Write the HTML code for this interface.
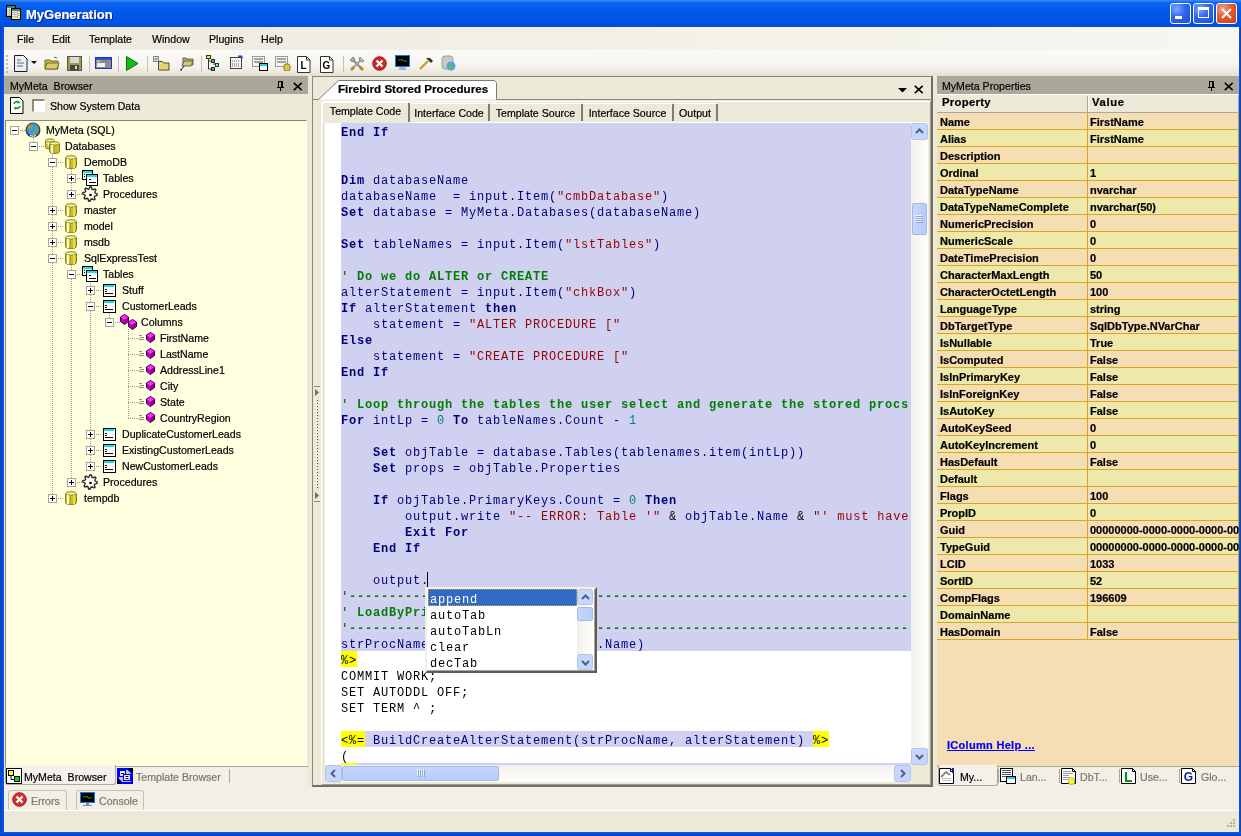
<!DOCTYPE html><html><head><meta charset="utf-8"><style>
*{box-sizing:border-box;margin:0;padding:0}
html,body{width:1241px;height:836px;overflow:hidden;background:#ECE9D8;will-change:transform;font-family:"Liberation Sans",sans-serif;font-size:11px;color:#000}
.a{position:absolute}
.t{position:absolute;white-space:pre;line-height:13px;font-size:10.6px;margin-top:1px;-webkit-text-stroke:0.2px currentColor}
.b{font-weight:bold;font-size:11px}
.mono{position:absolute;margin-top:2px;font-family:"Liberation Mono",monospace;font-size:12px;letter-spacing:0.8px;line-height:16px;white-space:pre;height:16px}
.k{color:#00007F;font-weight:bold}
.i{color:#00007F}
.s{color:#990000}
.c{color:#007F00;font-weight:bold}
.n{color:#007F7F}
.o{color:#000000}
.hl{background:#FFFF00}
</style></head><body>
<div class="a" style="left:0;top:0;width:1241px;height:27px;background:linear-gradient(#3A8CFA 0%,#0F64F0 10%,#0058EC 40%,#0054E6 80%,#004CDA 100%)"></div>
<div class="t" style="left:26px;top:6px;font-size:13px;line-height:16px;font-weight:bold;color:#fff;text-shadow:1px 1px 0 #0A1E7A">MyGeneration</div>
<svg class="a" style="left:0;top:0" width="26" height="24"><rect x="7" y="6" width="10" height="12" fill="#6A5030" opacity="0.7"/><rect x="6" y="5" width="10" height="12" fill="#000"/><rect x="7" y="6" width="8" height="10" fill="#B8B8B8"/><rect x="7" y="6" width="8" height="2" fill="#3A8A7A"/><rect x="7" y="8" width="2" height="1" fill="#fff"/><rect x="10" y="8" width="2" height="1" fill="#fff"/><rect x="13" y="8" width="2" height="1" fill="#fff"/><rect x="7" y="10" width="2" height="1" fill="#F4F0A0"/><rect x="10" y="10" width="2" height="1" fill="#F4F0A0"/><rect x="13" y="10" width="2" height="1" fill="#F4F0A0"/><rect x="7" y="12" width="2" height="1" fill="#fff"/><rect x="10" y="12" width="2" height="1" fill="#fff"/><rect x="13" y="12" width="2" height="1" fill="#fff"/><rect x="7" y="14" width="2" height="1" fill="#F4F0A0"/><rect x="10" y="14" width="2" height="1" fill="#F4F0A0"/><rect x="13" y="14" width="2" height="1" fill="#F4F0A0"/><rect x="12" y="9" width="10" height="12" fill="#6A5030" opacity="0.7"/><rect x="11" y="8" width="10" height="12" fill="#000"/><rect x="12" y="9" width="8" height="10" fill="#B8B8B8"/><rect x="12" y="9" width="8" height="2" fill="#3A8A7A"/><rect x="12" y="11" width="2" height="1" fill="#fff"/><rect x="15" y="11" width="2" height="1" fill="#fff"/><rect x="12" y="13" width="2" height="1" fill="#F4F0A0"/><rect x="15" y="13" width="2" height="1" fill="#F4F0A0"/><rect x="12" y="15" width="2" height="1" fill="#fff"/><rect x="15" y="15" width="2" height="1" fill="#fff"/><rect x="12" y="17" width="2" height="1" fill="#F4F0A0"/><rect x="15" y="17" width="2" height="1" fill="#F4F0A0"/><rect x="18" y="12" width="2" height="1" fill="#fff"/><rect x="18" y="14" width="2" height="1" fill="#F4F0A0"/><rect x="18" y="16" width="2" height="1" fill="#fff"/><rect x="12" y="18" width="8" height="1" fill="#F4F0A0"/></svg>
<div class="a" style="left:1170px;top:3px;width:21px;height:21px;border:1px solid #fff;border-radius:3px;background:radial-gradient(circle at 30% 25%,#7FA7FF 0%,#2E66F0 45%,#1E4FD8 100%)"></div>
<div class="a" style="left:1175px;top:16px;width:7px;height:3px;background:#fff"></div>
<div class="a" style="left:1193px;top:3px;width:21px;height:21px;border:1px solid #fff;border-radius:3px;background:radial-gradient(circle at 30% 25%,#7FA7FF 0%,#2E66F0 45%,#1E4FD8 100%)"></div>
<div class="a" style="left:1198px;top:7px;width:11px;height:11px;border:1px solid #fff;border-top-width:3px"></div>
<div class="a" style="left:1216px;top:3px;width:21px;height:21px;border:1px solid #fff;border-radius:3px;background:radial-gradient(circle at 30% 25%,#F2A089 0%,#E35B2D 45%,#C8401A 100%)"></div>
<svg class="a" style="left:1216px;top:3px" width="21" height="21"><path d="M6 6L15 15M15 6L6 15" stroke="#fff" stroke-width="2"/></svg>
<div class="a" style="left:0;top:26px;width:4px;height:810px;background:linear-gradient(90deg,#0040C8,#0A58E8)"></div>
<div class="a" style="left:1239px;top:26px;width:2px;height:810px;background:linear-gradient(90deg,#0A58E8,#0040C8)"></div>
<div class="a" style="left:0;top:832px;width:1241px;height:4px;background:linear-gradient(#0A58E8,#0040C8)"></div>
<div class="a" style="left:4px;top:27px;width:1235px;height:23px;background:linear-gradient(90deg,#EDEADF,#F1EFE6 40%,#F7F6F1)"></div>
<div class="t" style="left:17px;top:32px">File</div>
<div class="t" style="left:52px;top:32px">Edit</div>
<div class="t" style="left:89px;top:32px">Template</div>
<div class="t" style="left:152px;top:32px">Window</div>
<div class="t" style="left:209px;top:32px">Plugins</div>
<div class="t" style="left:261px;top:32px">Help</div>
<div class="a" style="left:4px;top:50px;width:1235px;height:26px;border-radius:0 3px 3px 0;background:linear-gradient(#FBFAF7,#F6F4EE 60%,#E4E1D3)"></div>
<svg class="a" style="left:6px;top:55px" width="3" height="18" viewBox="0 0 3 18"><rect x="0" y="0" width="2" height="2" fill="#C1BDAE"/><rect x="0" y="4" width="2" height="2" fill="#C1BDAE"/><rect x="0" y="8" width="2" height="2" fill="#C1BDAE"/><rect x="0" y="12" width="2" height="2" fill="#C1BDAE"/><rect x="0" y="16" width="2" height="2" fill="#C1BDAE"/></svg>
<svg class="a" style="left:14px;top:55px" width="14" height="17" viewBox="0 0 14 17"><path d="M0.5 0.5h9l3.5 3.5v12.5h-12.5z" fill="#E6F2F2" stroke="#301030"/><path d="M3 5h4M3 8h7M3 11h6" stroke="#667" stroke-width="1"/></svg>
<svg class="a" style="left:31px;top:61px" width="6" height="4" viewBox="0 0 6 4"><path d="M0 0h6l-3 3z" fill="#000"/></svg>
<svg class="a" style="left:44px;top:56px" width="16" height="14" viewBox="0 0 16 14"><path d="M1 4h5l1 1h7v8H1z" fill="#C6B75A" stroke="#7A6A20"/><path d="M3 7h12l-2 6H1z" fill="#D9CC6E" stroke="#7A6A20"/><path d="M10 1l3 1" stroke="#555"/></svg>
<svg class="a" style="left:67px;top:56px" width="15" height="15" viewBox="0 0 15 15"><rect x="0.5" y="0.5" width="14" height="14" fill="#A39B4A" stroke="#555"/><rect x="3" y="1" width="9" height="6" fill="#D8D8D8"/><rect x="3" y="9" width="9" height="5" fill="#444"/><rect x="8" y="10" width="2" height="3" fill="#ddd"/></svg>
<div class="a" style="left:89px;top:56px;width:1px;height:16px;background:#C5C2B2"></div>
<svg class="a" style="left:95px;top:57px" width="17" height="12" viewBox="0 0 17 12"><rect x="0.5" y="0.5" width="16" height="11" fill="#8C8C8C" stroke="#2030C0"/><rect x="1" y="1" width="15" height="2" fill="#3050D0"/><rect x="2" y="6" width="8" height="4" fill="#F0F0F0"/><path d="M2 4h3" stroke="#eee"/></svg>
<div class="a" style="left:118px;top:56px;width:1px;height:16px;background:#C5C2B2"></div>
<svg class="a" style="left:126px;top:56px" width="13" height="15" viewBox="0 0 13 15"><path d="M0.5 0.5L12 7.5 0.5 14.5z" fill="#10C010" stroke="#0A6A0A"/></svg>
<div class="a" style="left:147px;top:56px;width:1px;height:16px;background:#C5C2B2"></div>
<svg class="a" style="left:153px;top:56px" width="17" height="15" viewBox="0 0 17 15"><rect x="0.5" y="0.5" width="5" height="5" fill="#fff" stroke="#888"/><path d="M3 0.5v5M0.5 3h5" stroke="#888"/><path d="M5.5 5.5h4l1 1.5h5.5v7h-10.5z" fill="#E8E070" stroke="#444"/><path d="M8 9h7M8 11h7" stroke="#C8C050" stroke-dasharray="1 1"/></svg>
<svg class="a" style="left:178px;top:56px" width="16" height="16" viewBox="0 0 16 16"><path d="M5 2h3l1 1h6v6H5z" fill="#B8AE5A" stroke="#665"/><path d="M6 5h9l-2 5H4z" fill="#D0C870" stroke="#665"/><path d="M6 10L3 14M2 14h2" stroke="#222"/></svg>
<div class="a" style="left:201px;top:56px;width:1px;height:16px;background:#C5C2B2"></div>
<svg class="a" style="left:206px;top:55px" width="13" height="16" viewBox="0 0 13 16"><rect x="0.5" y="0.5" width="4" height="3" fill="#FFF000" stroke="#333"/><path d="M2.5 4v10h3M2.5 6h3M7 9h3" stroke="#333" fill="none"/><rect x="5.5" y="4.5" width="3" height="3" fill="#10D010" stroke="#333"/><rect x="5.5" y="12.5" width="3" height="3" fill="#10D010" stroke="#333"/><rect x="9.5" y="8.5" width="3" height="3" fill="#80E0F0" stroke="#333"/></svg>
<svg class="a" style="left:230px;top:55px" width="14" height="15" viewBox="0 0 14 15"><rect x="0.5" y="2.5" width="11" height="11" fill="#F4F4F4" stroke="#444"/><path d="M2 6h8M2 9h8M2 11h8" stroke="#666" stroke-dasharray="1 1"/><path d="M8 1l4 0 0 3" stroke="#3040A0" fill="#3040A0"/></svg>
<svg class="a" style="left:252px;top:56px" width="16" height="15" viewBox="0 0 16 15"><rect x="0.5" y="0.5" width="12" height="10" fill="#F4F4F4" stroke="#999"/><path d="M2 3h9M2 6h9" stroke="#888" stroke-width="1.3"/><rect x="7.5" y="7.5" width="8" height="7" fill="#fff" stroke="#000"/><rect x="8" y="8" width="7" height="2" fill="#2BC8E8"/></svg>
<svg class="a" style="left:275px;top:56px" width="16" height="15" viewBox="0 0 16 15"><rect x="0.5" y="0.5" width="12" height="10" fill="#F4F4F4" stroke="#999"/><path d="M2 3h9M2 6h9" stroke="#888" stroke-width="1.3"/><rect x="9" y="8" width="6" height="7" rx="2" fill="#D8CC40" stroke="#8A7A10"/></svg>
<svg class="a" style="left:297px;top:56px" width="14" height="17" viewBox="0 0 14 17"><path d="M0.5 0.5h9l3.5 3.5v12.5h-12.5z" fill="#fff" stroke="#333"/><path d="M9.5 0.5v3.5h3.5" fill="none" stroke="#333"/><text x="6.5" y="13" font-family="Liberation Sans" font-weight="bold" font-size="10" text-anchor="middle" fill="#000">L</text></svg>
<svg class="a" style="left:320px;top:56px" width="14" height="17" viewBox="0 0 14 17"><path d="M0.5 0.5h9l3.5 3.5v12.5h-12.5z" fill="#fff" stroke="#333"/><path d="M9.5 0.5v3.5h3.5" fill="none" stroke="#333"/><text x="6.5" y="13" font-family="Liberation Sans" font-weight="bold" font-size="10" text-anchor="middle" fill="#000">G</text></svg>
<div class="a" style="left:343px;top:56px;width:1px;height:16px;background:#C5C2B2"></div>
<svg class="a" style="left:349px;top:56px" width="16" height="16" viewBox="0 0 16 16"><path d="M3 3L13 13" stroke="#909090" stroke-width="2.4"/><path d="M1 4l3-3 2 2-3 3z" fill="#B0B0B0" stroke="#707070" stroke-width="0.8"/><path d="M13 3L3 13" stroke="#A0A0A0" stroke-width="2.2"/><path d="M11 1l4 4-2 1-3-3z" fill="#C0C0C0" stroke="#707070" stroke-width="0.8"/><path d="M5 11L2 14" stroke="#D07A20" stroke-width="2.6"/><path d="M11 11l3 3" stroke="#D07A20" stroke-width="2.6"/></svg>
<svg class="a" style="left:372px;top:56px" width="15" height="15" viewBox="0 0 15 15"><circle cx="7.5" cy="7.5" r="6.8" fill="#D02828" stroke="#A01818"/><path d="M4.5 4.5l6 6M10.5 4.5l-6 6" stroke="#fff" stroke-width="2.2"/></svg>
<svg class="a" style="left:395px;top:55px" width="15" height="16" viewBox="0 0 15 16"><rect x="0.5" y="0.5" width="14" height="11" fill="#000" stroke="#1080E0"/><path d="M3 5h3l1-1 1 2h4" stroke="#30C030" stroke-width="0.8" fill="none"/><path d="M5 12h5l2 3H3z" fill="#B0B0E0"/></svg>
<svg class="a" style="left:418px;top:56px" width="16" height="15" viewBox="0 0 16 15"><path d="M2 13L10 5" stroke="#C8A020" stroke-width="2.4"/><path d="M8 2l5 5 2-2-3-3z" fill="#333"/></svg>
<svg class="a" style="left:441px;top:55px" width="15" height="16" viewBox="0 0 15 16"><rect x="1" y="1" width="11" height="13" rx="3" fill="#C8C8C8" stroke="#A0A0A0"/><circle cx="10" cy="11" r="4.5" fill="#58A0E8"/><path d="M7 9l3 1 2 3-3 1z" fill="#50C830"/></svg>
<div class="a" style="left:4px;top:786px;width:1235px;height:24px;background:#F1EFE6"></div>
<div class="a" style="left:4px;top:76px;width:304px;height:18px;background:#ACA899"></div>
<div class="t" style="left:10px;top:79px">MyMeta  Browser</div>
<svg class="a" style="left:277px;top:81px" width="8" height="11" viewBox="0 0 8 11"><rect x="1" y="0" width="5" height="1" fill="#000"/><rect x="1" y="0" width="1" height="6" fill="#000"/><rect x="4" y="0" width="2" height="6" fill="#000"/><rect x="0" y="6" width="7" height="1" fill="#000"/><rect x="3" y="7" width="1" height="3" fill="#000"/></svg>
<svg class="a" style="left:293px;top:82px" width="10" height="9" viewBox="0 0 10 9"><path d="M0.8 0.8L8.7 8.2M8.7 0.8L0.8 8.2" stroke="#000" stroke-width="1.6"/></svg>
<svg class="a" style="left:10px;top:97px" width="14" height="17" viewBox="0 0 14 17"><path d="M0.5 0.5h9l3.5 3.5v12.5h-12.5z" fill="#fff" stroke="#000"/><path d="M4 7a3 3 0 0 1 5-1.5M10 9a3 3 0 0 1-5 1.5" stroke="#1A9A1A" stroke-width="1.6" fill="none"/><path d="M8 3.5l2.5 2.5-3 0.5zM6 13l-2.5-2.5 3-0.5z" fill="#1A9A1A"/></svg>
<div class="a" style="left:32px;top:99px;width:13px;height:13px;border-style:solid;border-width:2px 1px 1px 2px;border-color:#8F8C7F #FFFFFF #FFFFFF #8F8C7F;background:#fff"></div>
<div class="t" style="left:50px;top:99px">Show System Data</div>
<div class="a" style="left:5px;top:120px;width:302px;height:646px;background:#FFFFE0;border:1px solid #7F9DB9;border-color:#8A877A #fff #fff #8A877A"></div>
<svg class="a" style="left:0;top:0" width="310" height="836"><rect x="20" y="130" width="1" height="1" fill="#9A9A9A"/><rect x="22" y="130" width="1" height="1" fill="#9A9A9A"/><rect x="24" y="130" width="1" height="1" fill="#9A9A9A"/><rect x="33" y="137" width="1" height="1" fill="#9A9A9A"/><rect x="33" y="139" width="1" height="1" fill="#9A9A9A"/><rect x="33" y="141" width="1" height="1" fill="#9A9A9A"/><rect x="33" y="143" width="1" height="1" fill="#9A9A9A"/><rect x="33" y="145" width="1" height="1" fill="#9A9A9A"/><rect x="39" y="146" width="1" height="1" fill="#9A9A9A"/><rect x="41" y="146" width="1" height="1" fill="#9A9A9A"/><rect x="43" y="146" width="1" height="1" fill="#9A9A9A"/><rect x="52" y="153" width="1" height="1" fill="#9A9A9A"/><rect x="52" y="155" width="1" height="1" fill="#9A9A9A"/><rect x="52" y="157" width="1" height="1" fill="#9A9A9A"/><rect x="52" y="159" width="1" height="1" fill="#9A9A9A"/><rect x="52" y="161" width="1" height="1" fill="#9A9A9A"/><rect x="52" y="163" width="1" height="1" fill="#9A9A9A"/><rect x="52" y="165" width="1" height="1" fill="#9A9A9A"/><rect x="52" y="167" width="1" height="1" fill="#9A9A9A"/><rect x="52" y="169" width="1" height="1" fill="#9A9A9A"/><rect x="52" y="171" width="1" height="1" fill="#9A9A9A"/><rect x="52" y="173" width="1" height="1" fill="#9A9A9A"/><rect x="52" y="175" width="1" height="1" fill="#9A9A9A"/><rect x="52" y="177" width="1" height="1" fill="#9A9A9A"/><rect x="52" y="179" width="1" height="1" fill="#9A9A9A"/><rect x="52" y="181" width="1" height="1" fill="#9A9A9A"/><rect x="52" y="183" width="1" height="1" fill="#9A9A9A"/><rect x="52" y="185" width="1" height="1" fill="#9A9A9A"/><rect x="52" y="187" width="1" height="1" fill="#9A9A9A"/><rect x="52" y="189" width="1" height="1" fill="#9A9A9A"/><rect x="52" y="191" width="1" height="1" fill="#9A9A9A"/><rect x="52" y="193" width="1" height="1" fill="#9A9A9A"/><rect x="52" y="195" width="1" height="1" fill="#9A9A9A"/><rect x="52" y="197" width="1" height="1" fill="#9A9A9A"/><rect x="52" y="199" width="1" height="1" fill="#9A9A9A"/><rect x="52" y="201" width="1" height="1" fill="#9A9A9A"/><rect x="52" y="203" width="1" height="1" fill="#9A9A9A"/><rect x="52" y="205" width="1" height="1" fill="#9A9A9A"/><rect x="52" y="207" width="1" height="1" fill="#9A9A9A"/><rect x="52" y="209" width="1" height="1" fill="#9A9A9A"/><rect x="52" y="211" width="1" height="1" fill="#9A9A9A"/><rect x="52" y="213" width="1" height="1" fill="#9A9A9A"/><rect x="52" y="215" width="1" height="1" fill="#9A9A9A"/><rect x="52" y="217" width="1" height="1" fill="#9A9A9A"/><rect x="52" y="219" width="1" height="1" fill="#9A9A9A"/><rect x="52" y="221" width="1" height="1" fill="#9A9A9A"/><rect x="52" y="223" width="1" height="1" fill="#9A9A9A"/><rect x="52" y="225" width="1" height="1" fill="#9A9A9A"/><rect x="52" y="227" width="1" height="1" fill="#9A9A9A"/><rect x="52" y="229" width="1" height="1" fill="#9A9A9A"/><rect x="52" y="231" width="1" height="1" fill="#9A9A9A"/><rect x="52" y="233" width="1" height="1" fill="#9A9A9A"/><rect x="52" y="235" width="1" height="1" fill="#9A9A9A"/><rect x="52" y="237" width="1" height="1" fill="#9A9A9A"/><rect x="52" y="239" width="1" height="1" fill="#9A9A9A"/><rect x="52" y="241" width="1" height="1" fill="#9A9A9A"/><rect x="52" y="243" width="1" height="1" fill="#9A9A9A"/><rect x="52" y="245" width="1" height="1" fill="#9A9A9A"/><rect x="52" y="247" width="1" height="1" fill="#9A9A9A"/><rect x="52" y="249" width="1" height="1" fill="#9A9A9A"/><rect x="52" y="251" width="1" height="1" fill="#9A9A9A"/><rect x="52" y="253" width="1" height="1" fill="#9A9A9A"/><rect x="52" y="255" width="1" height="1" fill="#9A9A9A"/><rect x="52" y="257" width="1" height="1" fill="#9A9A9A"/><rect x="52" y="259" width="1" height="1" fill="#9A9A9A"/><rect x="52" y="261" width="1" height="1" fill="#9A9A9A"/><rect x="52" y="263" width="1" height="1" fill="#9A9A9A"/><rect x="52" y="265" width="1" height="1" fill="#9A9A9A"/><rect x="52" y="267" width="1" height="1" fill="#9A9A9A"/><rect x="52" y="269" width="1" height="1" fill="#9A9A9A"/><rect x="52" y="271" width="1" height="1" fill="#9A9A9A"/><rect x="52" y="273" width="1" height="1" fill="#9A9A9A"/><rect x="52" y="275" width="1" height="1" fill="#9A9A9A"/><rect x="52" y="277" width="1" height="1" fill="#9A9A9A"/><rect x="52" y="279" width="1" height="1" fill="#9A9A9A"/><rect x="52" y="281" width="1" height="1" fill="#9A9A9A"/><rect x="52" y="283" width="1" height="1" fill="#9A9A9A"/><rect x="52" y="285" width="1" height="1" fill="#9A9A9A"/><rect x="52" y="287" width="1" height="1" fill="#9A9A9A"/><rect x="52" y="289" width="1" height="1" fill="#9A9A9A"/><rect x="52" y="291" width="1" height="1" fill="#9A9A9A"/><rect x="52" y="293" width="1" height="1" fill="#9A9A9A"/><rect x="52" y="295" width="1" height="1" fill="#9A9A9A"/><rect x="52" y="297" width="1" height="1" fill="#9A9A9A"/><rect x="52" y="299" width="1" height="1" fill="#9A9A9A"/><rect x="52" y="301" width="1" height="1" fill="#9A9A9A"/><rect x="52" y="303" width="1" height="1" fill="#9A9A9A"/><rect x="52" y="305" width="1" height="1" fill="#9A9A9A"/><rect x="52" y="307" width="1" height="1" fill="#9A9A9A"/><rect x="52" y="309" width="1" height="1" fill="#9A9A9A"/><rect x="52" y="311" width="1" height="1" fill="#9A9A9A"/><rect x="52" y="313" width="1" height="1" fill="#9A9A9A"/><rect x="52" y="315" width="1" height="1" fill="#9A9A9A"/><rect x="52" y="317" width="1" height="1" fill="#9A9A9A"/><rect x="52" y="319" width="1" height="1" fill="#9A9A9A"/><rect x="52" y="321" width="1" height="1" fill="#9A9A9A"/><rect x="52" y="323" width="1" height="1" fill="#9A9A9A"/><rect x="52" y="325" width="1" height="1" fill="#9A9A9A"/><rect x="52" y="327" width="1" height="1" fill="#9A9A9A"/><rect x="52" y="329" width="1" height="1" fill="#9A9A9A"/><rect x="52" y="331" width="1" height="1" fill="#9A9A9A"/><rect x="52" y="333" width="1" height="1" fill="#9A9A9A"/><rect x="52" y="335" width="1" height="1" fill="#9A9A9A"/><rect x="52" y="337" width="1" height="1" fill="#9A9A9A"/><rect x="52" y="339" width="1" height="1" fill="#9A9A9A"/><rect x="52" y="341" width="1" height="1" fill="#9A9A9A"/><rect x="52" y="343" width="1" height="1" fill="#9A9A9A"/><rect x="52" y="345" width="1" height="1" fill="#9A9A9A"/><rect x="52" y="347" width="1" height="1" fill="#9A9A9A"/><rect x="52" y="349" width="1" height="1" fill="#9A9A9A"/><rect x="52" y="351" width="1" height="1" fill="#9A9A9A"/><rect x="52" y="353" width="1" height="1" fill="#9A9A9A"/><rect x="52" y="355" width="1" height="1" fill="#9A9A9A"/><rect x="52" y="357" width="1" height="1" fill="#9A9A9A"/><rect x="52" y="359" width="1" height="1" fill="#9A9A9A"/><rect x="52" y="361" width="1" height="1" fill="#9A9A9A"/><rect x="52" y="363" width="1" height="1" fill="#9A9A9A"/><rect x="52" y="365" width="1" height="1" fill="#9A9A9A"/><rect x="52" y="367" width="1" height="1" fill="#9A9A9A"/><rect x="52" y="369" width="1" height="1" fill="#9A9A9A"/><rect x="52" y="371" width="1" height="1" fill="#9A9A9A"/><rect x="52" y="373" width="1" height="1" fill="#9A9A9A"/><rect x="52" y="375" width="1" height="1" fill="#9A9A9A"/><rect x="52" y="377" width="1" height="1" fill="#9A9A9A"/><rect x="52" y="379" width="1" height="1" fill="#9A9A9A"/><rect x="52" y="381" width="1" height="1" fill="#9A9A9A"/><rect x="52" y="383" width="1" height="1" fill="#9A9A9A"/><rect x="52" y="385" width="1" height="1" fill="#9A9A9A"/><rect x="52" y="387" width="1" height="1" fill="#9A9A9A"/><rect x="52" y="389" width="1" height="1" fill="#9A9A9A"/><rect x="52" y="391" width="1" height="1" fill="#9A9A9A"/><rect x="52" y="393" width="1" height="1" fill="#9A9A9A"/><rect x="52" y="395" width="1" height="1" fill="#9A9A9A"/><rect x="52" y="397" width="1" height="1" fill="#9A9A9A"/><rect x="52" y="399" width="1" height="1" fill="#9A9A9A"/><rect x="52" y="401" width="1" height="1" fill="#9A9A9A"/><rect x="52" y="403" width="1" height="1" fill="#9A9A9A"/><rect x="52" y="405" width="1" height="1" fill="#9A9A9A"/><rect x="52" y="407" width="1" height="1" fill="#9A9A9A"/><rect x="52" y="409" width="1" height="1" fill="#9A9A9A"/><rect x="52" y="411" width="1" height="1" fill="#9A9A9A"/><rect x="52" y="413" width="1" height="1" fill="#9A9A9A"/><rect x="52" y="415" width="1" height="1" fill="#9A9A9A"/><rect x="52" y="417" width="1" height="1" fill="#9A9A9A"/><rect x="52" y="419" width="1" height="1" fill="#9A9A9A"/><rect x="52" y="421" width="1" height="1" fill="#9A9A9A"/><rect x="52" y="423" width="1" height="1" fill="#9A9A9A"/><rect x="52" y="425" width="1" height="1" fill="#9A9A9A"/><rect x="52" y="427" width="1" height="1" fill="#9A9A9A"/><rect x="52" y="429" width="1" height="1" fill="#9A9A9A"/><rect x="52" y="431" width="1" height="1" fill="#9A9A9A"/><rect x="52" y="433" width="1" height="1" fill="#9A9A9A"/><rect x="52" y="435" width="1" height="1" fill="#9A9A9A"/><rect x="52" y="437" width="1" height="1" fill="#9A9A9A"/><rect x="52" y="439" width="1" height="1" fill="#9A9A9A"/><rect x="52" y="441" width="1" height="1" fill="#9A9A9A"/><rect x="52" y="443" width="1" height="1" fill="#9A9A9A"/><rect x="52" y="445" width="1" height="1" fill="#9A9A9A"/><rect x="52" y="447" width="1" height="1" fill="#9A9A9A"/><rect x="52" y="449" width="1" height="1" fill="#9A9A9A"/><rect x="52" y="451" width="1" height="1" fill="#9A9A9A"/><rect x="52" y="453" width="1" height="1" fill="#9A9A9A"/><rect x="52" y="455" width="1" height="1" fill="#9A9A9A"/><rect x="52" y="457" width="1" height="1" fill="#9A9A9A"/><rect x="52" y="459" width="1" height="1" fill="#9A9A9A"/><rect x="52" y="461" width="1" height="1" fill="#9A9A9A"/><rect x="52" y="463" width="1" height="1" fill="#9A9A9A"/><rect x="52" y="465" width="1" height="1" fill="#9A9A9A"/><rect x="52" y="467" width="1" height="1" fill="#9A9A9A"/><rect x="52" y="469" width="1" height="1" fill="#9A9A9A"/><rect x="52" y="471" width="1" height="1" fill="#9A9A9A"/><rect x="52" y="473" width="1" height="1" fill="#9A9A9A"/><rect x="52" y="475" width="1" height="1" fill="#9A9A9A"/><rect x="52" y="477" width="1" height="1" fill="#9A9A9A"/><rect x="52" y="479" width="1" height="1" fill="#9A9A9A"/><rect x="52" y="481" width="1" height="1" fill="#9A9A9A"/><rect x="52" y="483" width="1" height="1" fill="#9A9A9A"/><rect x="52" y="485" width="1" height="1" fill="#9A9A9A"/><rect x="52" y="487" width="1" height="1" fill="#9A9A9A"/><rect x="52" y="489" width="1" height="1" fill="#9A9A9A"/><rect x="52" y="491" width="1" height="1" fill="#9A9A9A"/><rect x="52" y="493" width="1" height="1" fill="#9A9A9A"/><rect x="52" y="495" width="1" height="1" fill="#9A9A9A"/><rect x="52" y="497" width="1" height="1" fill="#9A9A9A"/><rect x="58" y="162" width="1" height="1" fill="#9A9A9A"/><rect x="60" y="162" width="1" height="1" fill="#9A9A9A"/><rect x="62" y="162" width="1" height="1" fill="#9A9A9A"/><rect x="71" y="169" width="1" height="1" fill="#9A9A9A"/><rect x="71" y="171" width="1" height="1" fill="#9A9A9A"/><rect x="71" y="173" width="1" height="1" fill="#9A9A9A"/><rect x="71" y="175" width="1" height="1" fill="#9A9A9A"/><rect x="71" y="177" width="1" height="1" fill="#9A9A9A"/><rect x="71" y="179" width="1" height="1" fill="#9A9A9A"/><rect x="71" y="181" width="1" height="1" fill="#9A9A9A"/><rect x="71" y="183" width="1" height="1" fill="#9A9A9A"/><rect x="71" y="185" width="1" height="1" fill="#9A9A9A"/><rect x="71" y="187" width="1" height="1" fill="#9A9A9A"/><rect x="71" y="189" width="1" height="1" fill="#9A9A9A"/><rect x="71" y="191" width="1" height="1" fill="#9A9A9A"/><rect x="71" y="193" width="1" height="1" fill="#9A9A9A"/><rect x="77" y="178" width="1" height="1" fill="#9A9A9A"/><rect x="79" y="178" width="1" height="1" fill="#9A9A9A"/><rect x="81" y="178" width="1" height="1" fill="#9A9A9A"/><rect x="77" y="194" width="1" height="1" fill="#9A9A9A"/><rect x="79" y="194" width="1" height="1" fill="#9A9A9A"/><rect x="81" y="194" width="1" height="1" fill="#9A9A9A"/><rect x="58" y="210" width="1" height="1" fill="#9A9A9A"/><rect x="60" y="210" width="1" height="1" fill="#9A9A9A"/><rect x="62" y="210" width="1" height="1" fill="#9A9A9A"/><rect x="58" y="226" width="1" height="1" fill="#9A9A9A"/><rect x="60" y="226" width="1" height="1" fill="#9A9A9A"/><rect x="62" y="226" width="1" height="1" fill="#9A9A9A"/><rect x="58" y="242" width="1" height="1" fill="#9A9A9A"/><rect x="60" y="242" width="1" height="1" fill="#9A9A9A"/><rect x="62" y="242" width="1" height="1" fill="#9A9A9A"/><rect x="58" y="258" width="1" height="1" fill="#9A9A9A"/><rect x="60" y="258" width="1" height="1" fill="#9A9A9A"/><rect x="62" y="258" width="1" height="1" fill="#9A9A9A"/><rect x="71" y="265" width="1" height="1" fill="#9A9A9A"/><rect x="71" y="267" width="1" height="1" fill="#9A9A9A"/><rect x="71" y="269" width="1" height="1" fill="#9A9A9A"/><rect x="71" y="271" width="1" height="1" fill="#9A9A9A"/><rect x="71" y="273" width="1" height="1" fill="#9A9A9A"/><rect x="71" y="275" width="1" height="1" fill="#9A9A9A"/><rect x="71" y="277" width="1" height="1" fill="#9A9A9A"/><rect x="71" y="279" width="1" height="1" fill="#9A9A9A"/><rect x="71" y="281" width="1" height="1" fill="#9A9A9A"/><rect x="71" y="283" width="1" height="1" fill="#9A9A9A"/><rect x="71" y="285" width="1" height="1" fill="#9A9A9A"/><rect x="71" y="287" width="1" height="1" fill="#9A9A9A"/><rect x="71" y="289" width="1" height="1" fill="#9A9A9A"/><rect x="71" y="291" width="1" height="1" fill="#9A9A9A"/><rect x="71" y="293" width="1" height="1" fill="#9A9A9A"/><rect x="71" y="295" width="1" height="1" fill="#9A9A9A"/><rect x="71" y="297" width="1" height="1" fill="#9A9A9A"/><rect x="71" y="299" width="1" height="1" fill="#9A9A9A"/><rect x="71" y="301" width="1" height="1" fill="#9A9A9A"/><rect x="71" y="303" width="1" height="1" fill="#9A9A9A"/><rect x="71" y="305" width="1" height="1" fill="#9A9A9A"/><rect x="71" y="307" width="1" height="1" fill="#9A9A9A"/><rect x="71" y="309" width="1" height="1" fill="#9A9A9A"/><rect x="71" y="311" width="1" height="1" fill="#9A9A9A"/><rect x="71" y="313" width="1" height="1" fill="#9A9A9A"/><rect x="71" y="315" width="1" height="1" fill="#9A9A9A"/><rect x="71" y="317" width="1" height="1" fill="#9A9A9A"/><rect x="71" y="319" width="1" height="1" fill="#9A9A9A"/><rect x="71" y="321" width="1" height="1" fill="#9A9A9A"/><rect x="71" y="323" width="1" height="1" fill="#9A9A9A"/><rect x="71" y="325" width="1" height="1" fill="#9A9A9A"/><rect x="71" y="327" width="1" height="1" fill="#9A9A9A"/><rect x="71" y="329" width="1" height="1" fill="#9A9A9A"/><rect x="71" y="331" width="1" height="1" fill="#9A9A9A"/><rect x="71" y="333" width="1" height="1" fill="#9A9A9A"/><rect x="71" y="335" width="1" height="1" fill="#9A9A9A"/><rect x="71" y="337" width="1" height="1" fill="#9A9A9A"/><rect x="71" y="339" width="1" height="1" fill="#9A9A9A"/><rect x="71" y="341" width="1" height="1" fill="#9A9A9A"/><rect x="71" y="343" width="1" height="1" fill="#9A9A9A"/><rect x="71" y="345" width="1" height="1" fill="#9A9A9A"/><rect x="71" y="347" width="1" height="1" fill="#9A9A9A"/><rect x="71" y="349" width="1" height="1" fill="#9A9A9A"/><rect x="71" y="351" width="1" height="1" fill="#9A9A9A"/><rect x="71" y="353" width="1" height="1" fill="#9A9A9A"/><rect x="71" y="355" width="1" height="1" fill="#9A9A9A"/><rect x="71" y="357" width="1" height="1" fill="#9A9A9A"/><rect x="71" y="359" width="1" height="1" fill="#9A9A9A"/><rect x="71" y="361" width="1" height="1" fill="#9A9A9A"/><rect x="71" y="363" width="1" height="1" fill="#9A9A9A"/><rect x="71" y="365" width="1" height="1" fill="#9A9A9A"/><rect x="71" y="367" width="1" height="1" fill="#9A9A9A"/><rect x="71" y="369" width="1" height="1" fill="#9A9A9A"/><rect x="71" y="371" width="1" height="1" fill="#9A9A9A"/><rect x="71" y="373" width="1" height="1" fill="#9A9A9A"/><rect x="71" y="375" width="1" height="1" fill="#9A9A9A"/><rect x="71" y="377" width="1" height="1" fill="#9A9A9A"/><rect x="71" y="379" width="1" height="1" fill="#9A9A9A"/><rect x="71" y="381" width="1" height="1" fill="#9A9A9A"/><rect x="71" y="383" width="1" height="1" fill="#9A9A9A"/><rect x="71" y="385" width="1" height="1" fill="#9A9A9A"/><rect x="71" y="387" width="1" height="1" fill="#9A9A9A"/><rect x="71" y="389" width="1" height="1" fill="#9A9A9A"/><rect x="71" y="391" width="1" height="1" fill="#9A9A9A"/><rect x="71" y="393" width="1" height="1" fill="#9A9A9A"/><rect x="71" y="395" width="1" height="1" fill="#9A9A9A"/><rect x="71" y="397" width="1" height="1" fill="#9A9A9A"/><rect x="71" y="399" width="1" height="1" fill="#9A9A9A"/><rect x="71" y="401" width="1" height="1" fill="#9A9A9A"/><rect x="71" y="403" width="1" height="1" fill="#9A9A9A"/><rect x="71" y="405" width="1" height="1" fill="#9A9A9A"/><rect x="71" y="407" width="1" height="1" fill="#9A9A9A"/><rect x="71" y="409" width="1" height="1" fill="#9A9A9A"/><rect x="71" y="411" width="1" height="1" fill="#9A9A9A"/><rect x="71" y="413" width="1" height="1" fill="#9A9A9A"/><rect x="71" y="415" width="1" height="1" fill="#9A9A9A"/><rect x="71" y="417" width="1" height="1" fill="#9A9A9A"/><rect x="71" y="419" width="1" height="1" fill="#9A9A9A"/><rect x="71" y="421" width="1" height="1" fill="#9A9A9A"/><rect x="71" y="423" width="1" height="1" fill="#9A9A9A"/><rect x="71" y="425" width="1" height="1" fill="#9A9A9A"/><rect x="71" y="427" width="1" height="1" fill="#9A9A9A"/><rect x="71" y="429" width="1" height="1" fill="#9A9A9A"/><rect x="71" y="431" width="1" height="1" fill="#9A9A9A"/><rect x="71" y="433" width="1" height="1" fill="#9A9A9A"/><rect x="71" y="435" width="1" height="1" fill="#9A9A9A"/><rect x="71" y="437" width="1" height="1" fill="#9A9A9A"/><rect x="71" y="439" width="1" height="1" fill="#9A9A9A"/><rect x="71" y="441" width="1" height="1" fill="#9A9A9A"/><rect x="71" y="443" width="1" height="1" fill="#9A9A9A"/><rect x="71" y="445" width="1" height="1" fill="#9A9A9A"/><rect x="71" y="447" width="1" height="1" fill="#9A9A9A"/><rect x="71" y="449" width="1" height="1" fill="#9A9A9A"/><rect x="71" y="451" width="1" height="1" fill="#9A9A9A"/><rect x="71" y="453" width="1" height="1" fill="#9A9A9A"/><rect x="71" y="455" width="1" height="1" fill="#9A9A9A"/><rect x="71" y="457" width="1" height="1" fill="#9A9A9A"/><rect x="71" y="459" width="1" height="1" fill="#9A9A9A"/><rect x="71" y="461" width="1" height="1" fill="#9A9A9A"/><rect x="71" y="463" width="1" height="1" fill="#9A9A9A"/><rect x="71" y="465" width="1" height="1" fill="#9A9A9A"/><rect x="71" y="467" width="1" height="1" fill="#9A9A9A"/><rect x="71" y="469" width="1" height="1" fill="#9A9A9A"/><rect x="71" y="471" width="1" height="1" fill="#9A9A9A"/><rect x="71" y="473" width="1" height="1" fill="#9A9A9A"/><rect x="71" y="475" width="1" height="1" fill="#9A9A9A"/><rect x="71" y="477" width="1" height="1" fill="#9A9A9A"/><rect x="71" y="479" width="1" height="1" fill="#9A9A9A"/><rect x="71" y="481" width="1" height="1" fill="#9A9A9A"/><rect x="77" y="274" width="1" height="1" fill="#9A9A9A"/><rect x="79" y="274" width="1" height="1" fill="#9A9A9A"/><rect x="81" y="274" width="1" height="1" fill="#9A9A9A"/><rect x="90" y="281" width="1" height="1" fill="#9A9A9A"/><rect x="90" y="283" width="1" height="1" fill="#9A9A9A"/><rect x="90" y="285" width="1" height="1" fill="#9A9A9A"/><rect x="90" y="287" width="1" height="1" fill="#9A9A9A"/><rect x="90" y="289" width="1" height="1" fill="#9A9A9A"/><rect x="90" y="291" width="1" height="1" fill="#9A9A9A"/><rect x="90" y="293" width="1" height="1" fill="#9A9A9A"/><rect x="90" y="295" width="1" height="1" fill="#9A9A9A"/><rect x="90" y="297" width="1" height="1" fill="#9A9A9A"/><rect x="90" y="299" width="1" height="1" fill="#9A9A9A"/><rect x="90" y="301" width="1" height="1" fill="#9A9A9A"/><rect x="90" y="303" width="1" height="1" fill="#9A9A9A"/><rect x="90" y="305" width="1" height="1" fill="#9A9A9A"/><rect x="90" y="307" width="1" height="1" fill="#9A9A9A"/><rect x="90" y="309" width="1" height="1" fill="#9A9A9A"/><rect x="90" y="311" width="1" height="1" fill="#9A9A9A"/><rect x="90" y="313" width="1" height="1" fill="#9A9A9A"/><rect x="90" y="315" width="1" height="1" fill="#9A9A9A"/><rect x="90" y="317" width="1" height="1" fill="#9A9A9A"/><rect x="90" y="319" width="1" height="1" fill="#9A9A9A"/><rect x="90" y="321" width="1" height="1" fill="#9A9A9A"/><rect x="90" y="323" width="1" height="1" fill="#9A9A9A"/><rect x="90" y="325" width="1" height="1" fill="#9A9A9A"/><rect x="90" y="327" width="1" height="1" fill="#9A9A9A"/><rect x="90" y="329" width="1" height="1" fill="#9A9A9A"/><rect x="90" y="331" width="1" height="1" fill="#9A9A9A"/><rect x="90" y="333" width="1" height="1" fill="#9A9A9A"/><rect x="90" y="335" width="1" height="1" fill="#9A9A9A"/><rect x="90" y="337" width="1" height="1" fill="#9A9A9A"/><rect x="90" y="339" width="1" height="1" fill="#9A9A9A"/><rect x="90" y="341" width="1" height="1" fill="#9A9A9A"/><rect x="90" y="343" width="1" height="1" fill="#9A9A9A"/><rect x="90" y="345" width="1" height="1" fill="#9A9A9A"/><rect x="90" y="347" width="1" height="1" fill="#9A9A9A"/><rect x="90" y="349" width="1" height="1" fill="#9A9A9A"/><rect x="90" y="351" width="1" height="1" fill="#9A9A9A"/><rect x="90" y="353" width="1" height="1" fill="#9A9A9A"/><rect x="90" y="355" width="1" height="1" fill="#9A9A9A"/><rect x="90" y="357" width="1" height="1" fill="#9A9A9A"/><rect x="90" y="359" width="1" height="1" fill="#9A9A9A"/><rect x="90" y="361" width="1" height="1" fill="#9A9A9A"/><rect x="90" y="363" width="1" height="1" fill="#9A9A9A"/><rect x="90" y="365" width="1" height="1" fill="#9A9A9A"/><rect x="90" y="367" width="1" height="1" fill="#9A9A9A"/><rect x="90" y="369" width="1" height="1" fill="#9A9A9A"/><rect x="90" y="371" width="1" height="1" fill="#9A9A9A"/><rect x="90" y="373" width="1" height="1" fill="#9A9A9A"/><rect x="90" y="375" width="1" height="1" fill="#9A9A9A"/><rect x="90" y="377" width="1" height="1" fill="#9A9A9A"/><rect x="90" y="379" width="1" height="1" fill="#9A9A9A"/><rect x="90" y="381" width="1" height="1" fill="#9A9A9A"/><rect x="90" y="383" width="1" height="1" fill="#9A9A9A"/><rect x="90" y="385" width="1" height="1" fill="#9A9A9A"/><rect x="90" y="387" width="1" height="1" fill="#9A9A9A"/><rect x="90" y="389" width="1" height="1" fill="#9A9A9A"/><rect x="90" y="391" width="1" height="1" fill="#9A9A9A"/><rect x="90" y="393" width="1" height="1" fill="#9A9A9A"/><rect x="90" y="395" width="1" height="1" fill="#9A9A9A"/><rect x="90" y="397" width="1" height="1" fill="#9A9A9A"/><rect x="90" y="399" width="1" height="1" fill="#9A9A9A"/><rect x="90" y="401" width="1" height="1" fill="#9A9A9A"/><rect x="90" y="403" width="1" height="1" fill="#9A9A9A"/><rect x="90" y="405" width="1" height="1" fill="#9A9A9A"/><rect x="90" y="407" width="1" height="1" fill="#9A9A9A"/><rect x="90" y="409" width="1" height="1" fill="#9A9A9A"/><rect x="90" y="411" width="1" height="1" fill="#9A9A9A"/><rect x="90" y="413" width="1" height="1" fill="#9A9A9A"/><rect x="90" y="415" width="1" height="1" fill="#9A9A9A"/><rect x="90" y="417" width="1" height="1" fill="#9A9A9A"/><rect x="90" y="419" width="1" height="1" fill="#9A9A9A"/><rect x="90" y="421" width="1" height="1" fill="#9A9A9A"/><rect x="90" y="423" width="1" height="1" fill="#9A9A9A"/><rect x="90" y="425" width="1" height="1" fill="#9A9A9A"/><rect x="90" y="427" width="1" height="1" fill="#9A9A9A"/><rect x="90" y="429" width="1" height="1" fill="#9A9A9A"/><rect x="90" y="431" width="1" height="1" fill="#9A9A9A"/><rect x="90" y="433" width="1" height="1" fill="#9A9A9A"/><rect x="90" y="435" width="1" height="1" fill="#9A9A9A"/><rect x="90" y="437" width="1" height="1" fill="#9A9A9A"/><rect x="90" y="439" width="1" height="1" fill="#9A9A9A"/><rect x="90" y="441" width="1" height="1" fill="#9A9A9A"/><rect x="90" y="443" width="1" height="1" fill="#9A9A9A"/><rect x="90" y="445" width="1" height="1" fill="#9A9A9A"/><rect x="90" y="447" width="1" height="1" fill="#9A9A9A"/><rect x="90" y="449" width="1" height="1" fill="#9A9A9A"/><rect x="90" y="451" width="1" height="1" fill="#9A9A9A"/><rect x="90" y="453" width="1" height="1" fill="#9A9A9A"/><rect x="90" y="455" width="1" height="1" fill="#9A9A9A"/><rect x="90" y="457" width="1" height="1" fill="#9A9A9A"/><rect x="90" y="459" width="1" height="1" fill="#9A9A9A"/><rect x="90" y="461" width="1" height="1" fill="#9A9A9A"/><rect x="90" y="463" width="1" height="1" fill="#9A9A9A"/><rect x="90" y="465" width="1" height="1" fill="#9A9A9A"/><rect x="96" y="290" width="1" height="1" fill="#9A9A9A"/><rect x="98" y="290" width="1" height="1" fill="#9A9A9A"/><rect x="100" y="290" width="1" height="1" fill="#9A9A9A"/><rect x="96" y="306" width="1" height="1" fill="#9A9A9A"/><rect x="98" y="306" width="1" height="1" fill="#9A9A9A"/><rect x="100" y="306" width="1" height="1" fill="#9A9A9A"/><rect x="109" y="313" width="1" height="1" fill="#9A9A9A"/><rect x="109" y="315" width="1" height="1" fill="#9A9A9A"/><rect x="109" y="317" width="1" height="1" fill="#9A9A9A"/><rect x="109" y="319" width="1" height="1" fill="#9A9A9A"/><rect x="109" y="321" width="1" height="1" fill="#9A9A9A"/><rect x="115" y="322" width="1" height="1" fill="#9A9A9A"/><rect x="117" y="322" width="1" height="1" fill="#9A9A9A"/><rect x="119" y="322" width="1" height="1" fill="#9A9A9A"/><rect x="128" y="329" width="1" height="1" fill="#9A9A9A"/><rect x="128" y="331" width="1" height="1" fill="#9A9A9A"/><rect x="128" y="333" width="1" height="1" fill="#9A9A9A"/><rect x="128" y="335" width="1" height="1" fill="#9A9A9A"/><rect x="128" y="337" width="1" height="1" fill="#9A9A9A"/><rect x="128" y="339" width="1" height="1" fill="#9A9A9A"/><rect x="128" y="341" width="1" height="1" fill="#9A9A9A"/><rect x="128" y="343" width="1" height="1" fill="#9A9A9A"/><rect x="128" y="345" width="1" height="1" fill="#9A9A9A"/><rect x="128" y="347" width="1" height="1" fill="#9A9A9A"/><rect x="128" y="349" width="1" height="1" fill="#9A9A9A"/><rect x="128" y="351" width="1" height="1" fill="#9A9A9A"/><rect x="128" y="353" width="1" height="1" fill="#9A9A9A"/><rect x="128" y="355" width="1" height="1" fill="#9A9A9A"/><rect x="128" y="357" width="1" height="1" fill="#9A9A9A"/><rect x="128" y="359" width="1" height="1" fill="#9A9A9A"/><rect x="128" y="361" width="1" height="1" fill="#9A9A9A"/><rect x="128" y="363" width="1" height="1" fill="#9A9A9A"/><rect x="128" y="365" width="1" height="1" fill="#9A9A9A"/><rect x="128" y="367" width="1" height="1" fill="#9A9A9A"/><rect x="128" y="369" width="1" height="1" fill="#9A9A9A"/><rect x="128" y="371" width="1" height="1" fill="#9A9A9A"/><rect x="128" y="373" width="1" height="1" fill="#9A9A9A"/><rect x="128" y="375" width="1" height="1" fill="#9A9A9A"/><rect x="128" y="377" width="1" height="1" fill="#9A9A9A"/><rect x="128" y="379" width="1" height="1" fill="#9A9A9A"/><rect x="128" y="381" width="1" height="1" fill="#9A9A9A"/><rect x="128" y="383" width="1" height="1" fill="#9A9A9A"/><rect x="128" y="385" width="1" height="1" fill="#9A9A9A"/><rect x="128" y="387" width="1" height="1" fill="#9A9A9A"/><rect x="128" y="389" width="1" height="1" fill="#9A9A9A"/><rect x="128" y="391" width="1" height="1" fill="#9A9A9A"/><rect x="128" y="393" width="1" height="1" fill="#9A9A9A"/><rect x="128" y="395" width="1" height="1" fill="#9A9A9A"/><rect x="128" y="397" width="1" height="1" fill="#9A9A9A"/><rect x="128" y="399" width="1" height="1" fill="#9A9A9A"/><rect x="128" y="401" width="1" height="1" fill="#9A9A9A"/><rect x="128" y="403" width="1" height="1" fill="#9A9A9A"/><rect x="128" y="405" width="1" height="1" fill="#9A9A9A"/><rect x="128" y="407" width="1" height="1" fill="#9A9A9A"/><rect x="128" y="409" width="1" height="1" fill="#9A9A9A"/><rect x="128" y="411" width="1" height="1" fill="#9A9A9A"/><rect x="128" y="413" width="1" height="1" fill="#9A9A9A"/><rect x="128" y="415" width="1" height="1" fill="#9A9A9A"/><rect x="128" y="417" width="1" height="1" fill="#9A9A9A"/><rect x="128" y="338" width="1" height="1" fill="#9A9A9A"/><rect x="130" y="338" width="1" height="1" fill="#9A9A9A"/><rect x="132" y="338" width="1" height="1" fill="#9A9A9A"/><rect x="134" y="338" width="1" height="1" fill="#9A9A9A"/><rect x="136" y="338" width="1" height="1" fill="#9A9A9A"/><rect x="138" y="338" width="1" height="1" fill="#9A9A9A"/><rect x="128" y="354" width="1" height="1" fill="#9A9A9A"/><rect x="130" y="354" width="1" height="1" fill="#9A9A9A"/><rect x="132" y="354" width="1" height="1" fill="#9A9A9A"/><rect x="134" y="354" width="1" height="1" fill="#9A9A9A"/><rect x="136" y="354" width="1" height="1" fill="#9A9A9A"/><rect x="138" y="354" width="1" height="1" fill="#9A9A9A"/><rect x="128" y="370" width="1" height="1" fill="#9A9A9A"/><rect x="130" y="370" width="1" height="1" fill="#9A9A9A"/><rect x="132" y="370" width="1" height="1" fill="#9A9A9A"/><rect x="134" y="370" width="1" height="1" fill="#9A9A9A"/><rect x="136" y="370" width="1" height="1" fill="#9A9A9A"/><rect x="138" y="370" width="1" height="1" fill="#9A9A9A"/><rect x="128" y="386" width="1" height="1" fill="#9A9A9A"/><rect x="130" y="386" width="1" height="1" fill="#9A9A9A"/><rect x="132" y="386" width="1" height="1" fill="#9A9A9A"/><rect x="134" y="386" width="1" height="1" fill="#9A9A9A"/><rect x="136" y="386" width="1" height="1" fill="#9A9A9A"/><rect x="138" y="386" width="1" height="1" fill="#9A9A9A"/><rect x="128" y="402" width="1" height="1" fill="#9A9A9A"/><rect x="130" y="402" width="1" height="1" fill="#9A9A9A"/><rect x="132" y="402" width="1" height="1" fill="#9A9A9A"/><rect x="134" y="402" width="1" height="1" fill="#9A9A9A"/><rect x="136" y="402" width="1" height="1" fill="#9A9A9A"/><rect x="138" y="402" width="1" height="1" fill="#9A9A9A"/><rect x="128" y="418" width="1" height="1" fill="#9A9A9A"/><rect x="130" y="418" width="1" height="1" fill="#9A9A9A"/><rect x="132" y="418" width="1" height="1" fill="#9A9A9A"/><rect x="134" y="418" width="1" height="1" fill="#9A9A9A"/><rect x="136" y="418" width="1" height="1" fill="#9A9A9A"/><rect x="138" y="418" width="1" height="1" fill="#9A9A9A"/><rect x="96" y="434" width="1" height="1" fill="#9A9A9A"/><rect x="98" y="434" width="1" height="1" fill="#9A9A9A"/><rect x="100" y="434" width="1" height="1" fill="#9A9A9A"/><rect x="96" y="450" width="1" height="1" fill="#9A9A9A"/><rect x="98" y="450" width="1" height="1" fill="#9A9A9A"/><rect x="100" y="450" width="1" height="1" fill="#9A9A9A"/><rect x="96" y="466" width="1" height="1" fill="#9A9A9A"/><rect x="98" y="466" width="1" height="1" fill="#9A9A9A"/><rect x="100" y="466" width="1" height="1" fill="#9A9A9A"/><rect x="77" y="482" width="1" height="1" fill="#9A9A9A"/><rect x="79" y="482" width="1" height="1" fill="#9A9A9A"/><rect x="81" y="482" width="1" height="1" fill="#9A9A9A"/><rect x="58" y="498" width="1" height="1" fill="#9A9A9A"/><rect x="60" y="498" width="1" height="1" fill="#9A9A9A"/><rect x="62" y="498" width="1" height="1" fill="#9A9A9A"/></svg>
<div class="a" style="left:10px;top:126px;width:9px;height:9px;border:1px solid #A5A59A;background:#fff"></div>
<div class="a" style="left:12px;top:130px;width:5px;height:1px;background:#000"></div>
<svg class="a" style="left:25px;top:122px" width="16" height="16" viewBox="0 0 16 16"><circle cx="8" cy="8" r="7.5" fill="#3A3A20"/><circle cx="8" cy="7.5" r="6.2" fill="#2E9BE6"/><path d="M3 5l3-2 2 1-1 3-3 1zM9 4l3 1 1 3-2 1zM8 10l3 0-1 3-2-1z" fill="#C09020"/><path d="M5 13.5q3 1.5 6 0" stroke="#fff" stroke-width="1.2" fill="none"/></svg>
<div class="t" style="left:46px;top:123px">MyMeta (SQL)</div>
<div class="a" style="left:29px;top:142px;width:9px;height:9px;border:1px solid #A5A59A;background:#fff"></div>
<div class="a" style="left:31px;top:146px;width:5px;height:1px;background:#000"></div>
<svg class="a" style="left:44px;top:138px" width="18" height="16" viewBox="0 0 18 16"><path d="M1.5 2.5v7q0 1.5 4.5 1.5" fill="#C8C020" stroke="#8A8420"/><ellipse cx="6" cy="2.5" rx="4.5" ry="1.6" fill="#F4F090" stroke="#8A8420"/><path d="M5.5 5.5v8q0 2 5 2t5-2v-8z" fill="#C8C020" stroke="#8A8420"/><ellipse cx="10.5" cy="5.5" rx="5" ry="1.7" fill="#F4F090" stroke="#8A8420"/><rect x="7" y="7" width="2" height="8" fill="#F8F8D0"/><rect x="10" y="7" width="1" height="8" fill="#A8A060"/></svg>
<div class="t" style="left:65px;top:139px">Databases</div>
<div class="a" style="left:48px;top:158px;width:9px;height:9px;border:1px solid #A5A59A;background:#fff"></div>
<div class="a" style="left:50px;top:162px;width:5px;height:1px;background:#000"></div>
<svg class="a" style="left:63px;top:154px" width="16" height="16" viewBox="0 0 16 16"><path d="M2.5 3.5v9q0 2 5.5 2t5.5-2v-9z" fill="#C8C020" stroke="#8A8420"/><ellipse cx="8" cy="3.5" rx="5.5" ry="1.8" fill="#F4F090" stroke="#8A8420"/><rect x="4" y="5" width="2" height="9" fill="#F8F8D0"/><rect x="7" y="5" width="1" height="9" fill="#A8A060"/><rect x="10" y="5" width="2" height="9" fill="#E8E040"/></svg>
<div class="t" style="left:84px;top:155px">DemoDB</div>
<div class="a" style="left:67px;top:174px;width:9px;height:9px;border:1px solid #A5A59A;background:#fff"></div>
<div class="a" style="left:69px;top:178px;width:5px;height:1px;background:#000"></div>
<div class="a" style="left:71px;top:176px;width:1px;height:5px;background:#000"></div>
<svg class="a" style="left:82px;top:170px" width="16" height="16" viewBox="0 0 16 16"><rect x="0.5" y="0.5" width="10" height="9" fill="#fff" stroke="#000"/><rect x="1" y="1" width="9" height="2" fill="#10E0F0"/><rect x="2" y="4" width="1" height="1" fill="#000"/><rect x="2" y="6" width="1" height="1" fill="#000"/><rect x="4.5" y="4.5" width="11" height="11" fill="#fff" stroke="#000"/><rect x="5" y="5" width="10" height="2" fill="#10E0F0"/><path d="M7 9.5h2M7 12.5h7" stroke="#000"/></svg>
<div class="t" style="left:103px;top:171px">Tables</div>
<div class="a" style="left:67px;top:190px;width:9px;height:9px;border:1px solid #A5A59A;background:#fff"></div>
<div class="a" style="left:69px;top:194px;width:5px;height:1px;background:#000"></div>
<div class="a" style="left:71px;top:192px;width:1px;height:5px;background:#000"></div>
<svg class="a" style="left:82px;top:186px" width="16" height="16" viewBox="0 0 16 16"><path d="M8.00 0.80 L9.40 0.94 L9.99 3.20 L10.89 3.68 L13.09 2.91 L13.99 4.00 L12.80 6.01 L13.10 6.99 L15.20 8.00 L15.06 9.40 L12.80 9.99 L12.32 10.89 L13.09 13.09 L12.00 13.99 L9.99 12.80 L9.01 13.10 L8.00 15.20 L6.60 15.06 L6.01 12.80 L5.11 12.32 L2.91 13.09 L2.01 12.00 L3.20 9.99 L2.90 9.01 L0.80 8.00 L0.94 6.60 L3.20 6.01 L3.68 5.11 L2.91 2.91 L4.00 2.01 L6.01 3.20 L6.99 2.90Z" fill="#FFFFF0" stroke="#202020" stroke-width="1.3"/><circle cx="8.5" cy="9" r="1.3" fill="#000"/></svg>
<div class="t" style="left:103px;top:187px">Procedures</div>
<div class="a" style="left:48px;top:206px;width:9px;height:9px;border:1px solid #A5A59A;background:#fff"></div>
<div class="a" style="left:50px;top:210px;width:5px;height:1px;background:#000"></div>
<div class="a" style="left:52px;top:208px;width:1px;height:5px;background:#000"></div>
<svg class="a" style="left:63px;top:202px" width="16" height="16" viewBox="0 0 16 16"><path d="M2.5 3.5v9q0 2 5.5 2t5.5-2v-9z" fill="#C8C020" stroke="#8A8420"/><ellipse cx="8" cy="3.5" rx="5.5" ry="1.8" fill="#F4F090" stroke="#8A8420"/><rect x="4" y="5" width="2" height="9" fill="#F8F8D0"/><rect x="7" y="5" width="1" height="9" fill="#A8A060"/><rect x="10" y="5" width="2" height="9" fill="#E8E040"/></svg>
<div class="t" style="left:84px;top:203px">master</div>
<div class="a" style="left:48px;top:222px;width:9px;height:9px;border:1px solid #A5A59A;background:#fff"></div>
<div class="a" style="left:50px;top:226px;width:5px;height:1px;background:#000"></div>
<div class="a" style="left:52px;top:224px;width:1px;height:5px;background:#000"></div>
<svg class="a" style="left:63px;top:218px" width="16" height="16" viewBox="0 0 16 16"><path d="M2.5 3.5v9q0 2 5.5 2t5.5-2v-9z" fill="#C8C020" stroke="#8A8420"/><ellipse cx="8" cy="3.5" rx="5.5" ry="1.8" fill="#F4F090" stroke="#8A8420"/><rect x="4" y="5" width="2" height="9" fill="#F8F8D0"/><rect x="7" y="5" width="1" height="9" fill="#A8A060"/><rect x="10" y="5" width="2" height="9" fill="#E8E040"/></svg>
<div class="t" style="left:84px;top:219px">model</div>
<div class="a" style="left:48px;top:238px;width:9px;height:9px;border:1px solid #A5A59A;background:#fff"></div>
<div class="a" style="left:50px;top:242px;width:5px;height:1px;background:#000"></div>
<div class="a" style="left:52px;top:240px;width:1px;height:5px;background:#000"></div>
<svg class="a" style="left:63px;top:234px" width="16" height="16" viewBox="0 0 16 16"><path d="M2.5 3.5v9q0 2 5.5 2t5.5-2v-9z" fill="#C8C020" stroke="#8A8420"/><ellipse cx="8" cy="3.5" rx="5.5" ry="1.8" fill="#F4F090" stroke="#8A8420"/><rect x="4" y="5" width="2" height="9" fill="#F8F8D0"/><rect x="7" y="5" width="1" height="9" fill="#A8A060"/><rect x="10" y="5" width="2" height="9" fill="#E8E040"/></svg>
<div class="t" style="left:84px;top:235px">msdb</div>
<div class="a" style="left:48px;top:254px;width:9px;height:9px;border:1px solid #A5A59A;background:#fff"></div>
<div class="a" style="left:50px;top:258px;width:5px;height:1px;background:#000"></div>
<svg class="a" style="left:63px;top:250px" width="16" height="16" viewBox="0 0 16 16"><path d="M2.5 3.5v9q0 2 5.5 2t5.5-2v-9z" fill="#C8C020" stroke="#8A8420"/><ellipse cx="8" cy="3.5" rx="5.5" ry="1.8" fill="#F4F090" stroke="#8A8420"/><rect x="4" y="5" width="2" height="9" fill="#F8F8D0"/><rect x="7" y="5" width="1" height="9" fill="#A8A060"/><rect x="10" y="5" width="2" height="9" fill="#E8E040"/></svg>
<div class="t" style="left:84px;top:251px">SqlExpressTest</div>
<div class="a" style="left:67px;top:270px;width:9px;height:9px;border:1px solid #A5A59A;background:#fff"></div>
<div class="a" style="left:69px;top:274px;width:5px;height:1px;background:#000"></div>
<svg class="a" style="left:82px;top:266px" width="16" height="16" viewBox="0 0 16 16"><rect x="0.5" y="0.5" width="10" height="9" fill="#fff" stroke="#000"/><rect x="1" y="1" width="9" height="2" fill="#10E0F0"/><rect x="2" y="4" width="1" height="1" fill="#000"/><rect x="2" y="6" width="1" height="1" fill="#000"/><rect x="4.5" y="4.5" width="11" height="11" fill="#fff" stroke="#000"/><rect x="5" y="5" width="10" height="2" fill="#10E0F0"/><path d="M7 9.5h2M7 12.5h7" stroke="#000"/></svg>
<div class="t" style="left:103px;top:267px">Tables</div>
<div class="a" style="left:86px;top:286px;width:9px;height:9px;border:1px solid #A5A59A;background:#fff"></div>
<div class="a" style="left:88px;top:290px;width:5px;height:1px;background:#000"></div>
<div class="a" style="left:90px;top:288px;width:1px;height:5px;background:#000"></div>
<svg class="a" style="left:101px;top:282px" width="16" height="16" viewBox="0 0 16 16"><rect x="2.5" y="2.5" width="12" height="12" fill="#fff" stroke="#000"/><rect x="2" y="2" width="1" height="13" fill="#000"/><rect x="2" y="14" width="13" height="1" fill="#000"/><rect x="3" y="3" width="10" height="2" fill="#10E0F0"/><path d="M4 7.5h2M4 9.5h2M4 11.5h8" stroke="#000"/></svg>
<div class="t" style="left:122px;top:283px">Stuff</div>
<div class="a" style="left:86px;top:302px;width:9px;height:9px;border:1px solid #A5A59A;background:#fff"></div>
<div class="a" style="left:88px;top:306px;width:5px;height:1px;background:#000"></div>
<svg class="a" style="left:101px;top:298px" width="16" height="16" viewBox="0 0 16 16"><rect x="2.5" y="2.5" width="12" height="12" fill="#fff" stroke="#000"/><rect x="2" y="2" width="1" height="13" fill="#000"/><rect x="2" y="14" width="13" height="1" fill="#000"/><rect x="3" y="3" width="10" height="2" fill="#10E0F0"/><path d="M4 7.5h2M4 9.5h2M4 11.5h8" stroke="#000"/></svg>
<div class="t" style="left:122px;top:299px">CustomerLeads</div>
<div class="a" style="left:105px;top:318px;width:9px;height:9px;border:1px solid #A5A59A;background:#fff"></div>
<div class="a" style="left:107px;top:322px;width:5px;height:1px;background:#000"></div>
<svg class="a" style="left:120px;top:314px" width="18" height="17" viewBox="0 0 18 17"><path d="M4.5 0.5L8.5 3V7.5L4.5 10.5L0.5 7.5V3Z" fill="#C000C0" stroke="#300030"/><path d="M1 3.2L4.5 1L8 3.2L4.5 6Z" fill="#FF30FF"/><path d="M4.5 6V10L8 7.5V3.5Z" fill="#900090"/><path d="M12.5 5.5L16.5 8V12.5L12.5 15.5L8.5 12.5V8Z" fill="#C000C0" stroke="#300030"/><path d="M9 8.2L12.5 6L16 8.2L12.5 11Z" fill="#FF30FF"/><path d="M12.5 11V15L16 12.5V8.5Z" fill="#900090"/></svg>
<div class="t" style="left:141px;top:315px">Columns</div>
<svg class="a" style="left:139px;top:330px" width="18" height="16" viewBox="0 0 18 16"><path d="M0 5.5h3M1 7.5h4M0 9.5h5" stroke="#8A8A8A" stroke-dasharray="1 0"/><path d="M11.5 2.5L15.5 5V9.5L11.5 12.5L7.5 9.5V5Z" fill="#C000C0" stroke="#300030"/><path d="M8 5.2L11.5 3L15 5.2L11.5 8Z" fill="#FF30FF"/><path d="M11.5 8V12L15 9.5V5.5Z" fill="#900090"/></svg>
<div class="t" style="left:160px;top:331px">FirstName</div>
<svg class="a" style="left:139px;top:346px" width="18" height="16" viewBox="0 0 18 16"><path d="M0 5.5h3M1 7.5h4M0 9.5h5" stroke="#8A8A8A" stroke-dasharray="1 0"/><path d="M11.5 2.5L15.5 5V9.5L11.5 12.5L7.5 9.5V5Z" fill="#C000C0" stroke="#300030"/><path d="M8 5.2L11.5 3L15 5.2L11.5 8Z" fill="#FF30FF"/><path d="M11.5 8V12L15 9.5V5.5Z" fill="#900090"/></svg>
<div class="t" style="left:160px;top:347px">LastName</div>
<svg class="a" style="left:139px;top:362px" width="18" height="16" viewBox="0 0 18 16"><path d="M0 5.5h3M1 7.5h4M0 9.5h5" stroke="#8A8A8A" stroke-dasharray="1 0"/><path d="M11.5 2.5L15.5 5V9.5L11.5 12.5L7.5 9.5V5Z" fill="#C000C0" stroke="#300030"/><path d="M8 5.2L11.5 3L15 5.2L11.5 8Z" fill="#FF30FF"/><path d="M11.5 8V12L15 9.5V5.5Z" fill="#900090"/></svg>
<div class="t" style="left:160px;top:363px">AddressLine1</div>
<svg class="a" style="left:139px;top:378px" width="18" height="16" viewBox="0 0 18 16"><path d="M0 5.5h3M1 7.5h4M0 9.5h5" stroke="#8A8A8A" stroke-dasharray="1 0"/><path d="M11.5 2.5L15.5 5V9.5L11.5 12.5L7.5 9.5V5Z" fill="#C000C0" stroke="#300030"/><path d="M8 5.2L11.5 3L15 5.2L11.5 8Z" fill="#FF30FF"/><path d="M11.5 8V12L15 9.5V5.5Z" fill="#900090"/></svg>
<div class="t" style="left:160px;top:379px">City</div>
<svg class="a" style="left:139px;top:394px" width="18" height="16" viewBox="0 0 18 16"><path d="M0 5.5h3M1 7.5h4M0 9.5h5" stroke="#8A8A8A" stroke-dasharray="1 0"/><path d="M11.5 2.5L15.5 5V9.5L11.5 12.5L7.5 9.5V5Z" fill="#C000C0" stroke="#300030"/><path d="M8 5.2L11.5 3L15 5.2L11.5 8Z" fill="#FF30FF"/><path d="M11.5 8V12L15 9.5V5.5Z" fill="#900090"/></svg>
<div class="t" style="left:160px;top:395px">State</div>
<svg class="a" style="left:139px;top:410px" width="18" height="16" viewBox="0 0 18 16"><path d="M0 5.5h3M1 7.5h4M0 9.5h5" stroke="#8A8A8A" stroke-dasharray="1 0"/><path d="M11.5 2.5L15.5 5V9.5L11.5 12.5L7.5 9.5V5Z" fill="#C000C0" stroke="#300030"/><path d="M8 5.2L11.5 3L15 5.2L11.5 8Z" fill="#FF30FF"/><path d="M11.5 8V12L15 9.5V5.5Z" fill="#900090"/></svg>
<div class="t" style="left:160px;top:411px">CountryRegion</div>
<div class="a" style="left:86px;top:430px;width:9px;height:9px;border:1px solid #A5A59A;background:#fff"></div>
<div class="a" style="left:88px;top:434px;width:5px;height:1px;background:#000"></div>
<div class="a" style="left:90px;top:432px;width:1px;height:5px;background:#000"></div>
<svg class="a" style="left:101px;top:426px" width="16" height="16" viewBox="0 0 16 16"><rect x="2.5" y="2.5" width="12" height="12" fill="#fff" stroke="#000"/><rect x="2" y="2" width="1" height="13" fill="#000"/><rect x="2" y="14" width="13" height="1" fill="#000"/><rect x="3" y="3" width="10" height="2" fill="#10E0F0"/><path d="M4 7.5h2M4 9.5h2M4 11.5h8" stroke="#000"/></svg>
<div class="t" style="left:122px;top:427px">DuplicateCustomerLeads</div>
<div class="a" style="left:86px;top:446px;width:9px;height:9px;border:1px solid #A5A59A;background:#fff"></div>
<div class="a" style="left:88px;top:450px;width:5px;height:1px;background:#000"></div>
<div class="a" style="left:90px;top:448px;width:1px;height:5px;background:#000"></div>
<svg class="a" style="left:101px;top:442px" width="16" height="16" viewBox="0 0 16 16"><rect x="2.5" y="2.5" width="12" height="12" fill="#fff" stroke="#000"/><rect x="2" y="2" width="1" height="13" fill="#000"/><rect x="2" y="14" width="13" height="1" fill="#000"/><rect x="3" y="3" width="10" height="2" fill="#10E0F0"/><path d="M4 7.5h2M4 9.5h2M4 11.5h8" stroke="#000"/></svg>
<div class="t" style="left:122px;top:443px">ExistingCustomerLeads</div>
<div class="a" style="left:86px;top:462px;width:9px;height:9px;border:1px solid #A5A59A;background:#fff"></div>
<div class="a" style="left:88px;top:466px;width:5px;height:1px;background:#000"></div>
<div class="a" style="left:90px;top:464px;width:1px;height:5px;background:#000"></div>
<svg class="a" style="left:101px;top:458px" width="16" height="16" viewBox="0 0 16 16"><rect x="2.5" y="2.5" width="12" height="12" fill="#fff" stroke="#000"/><rect x="2" y="2" width="1" height="13" fill="#000"/><rect x="2" y="14" width="13" height="1" fill="#000"/><rect x="3" y="3" width="10" height="2" fill="#10E0F0"/><path d="M4 7.5h2M4 9.5h2M4 11.5h8" stroke="#000"/></svg>
<div class="t" style="left:122px;top:459px">NewCustomerLeads</div>
<div class="a" style="left:67px;top:478px;width:9px;height:9px;border:1px solid #A5A59A;background:#fff"></div>
<div class="a" style="left:69px;top:482px;width:5px;height:1px;background:#000"></div>
<div class="a" style="left:71px;top:480px;width:1px;height:5px;background:#000"></div>
<svg class="a" style="left:82px;top:474px" width="16" height="16" viewBox="0 0 16 16"><path d="M8.00 0.80 L9.40 0.94 L9.99 3.20 L10.89 3.68 L13.09 2.91 L13.99 4.00 L12.80 6.01 L13.10 6.99 L15.20 8.00 L15.06 9.40 L12.80 9.99 L12.32 10.89 L13.09 13.09 L12.00 13.99 L9.99 12.80 L9.01 13.10 L8.00 15.20 L6.60 15.06 L6.01 12.80 L5.11 12.32 L2.91 13.09 L2.01 12.00 L3.20 9.99 L2.90 9.01 L0.80 8.00 L0.94 6.60 L3.20 6.01 L3.68 5.11 L2.91 2.91 L4.00 2.01 L6.01 3.20 L6.99 2.90Z" fill="#FFFFF0" stroke="#202020" stroke-width="1.3"/><circle cx="8.5" cy="9" r="1.3" fill="#000"/></svg>
<div class="t" style="left:103px;top:475px">Procedures</div>
<div class="a" style="left:48px;top:494px;width:9px;height:9px;border:1px solid #A5A59A;background:#fff"></div>
<div class="a" style="left:50px;top:498px;width:5px;height:1px;background:#000"></div>
<div class="a" style="left:52px;top:496px;width:1px;height:5px;background:#000"></div>
<svg class="a" style="left:63px;top:490px" width="16" height="16" viewBox="0 0 16 16"><path d="M2.5 3.5v9q0 2 5.5 2t5.5-2v-9z" fill="#C8C020" stroke="#8A8420"/><ellipse cx="8" cy="3.5" rx="5.5" ry="1.8" fill="#F4F090" stroke="#8A8420"/><rect x="4" y="5" width="2" height="9" fill="#F8F8D0"/><rect x="7" y="5" width="1" height="9" fill="#A8A060"/><rect x="10" y="5" width="2" height="9" fill="#E8E040"/></svg>
<div class="t" style="left:84px;top:491px">tempdb</div>
<div class="a" style="left:4px;top:766px;width:304px;height:20px;background:#F1EFE6;border-top:1px solid #ACA899"></div>
<div class="a" style="left:5px;top:765px;width:111px;height:20px;background:#F3F1EA;border:1px solid #ACA899;border-top:none;border-radius:0 0 3px 3px"></div>
<svg class="a" style="left:6px;top:768px" width="16" height="16" viewBox="0 0 16 16"><rect x="0.5" y="0.5" width="15" height="15" fill="#fff" stroke="#000"/><rect x="2.5" y="2.5" width="5" height="5" fill="#FFFF00" stroke="#000"/><rect x="8.5" y="8.5" width="5" height="5" fill="#00E000" stroke="#000"/><path d="M5 8v3.5h3.5" stroke="#000" fill="none"/></svg>
<div class="t" style="left:24px;top:770px">MyMeta  Browser</div>
<svg class="a" style="left:117px;top:768px" width="16" height="16" viewBox="0 0 16 16"><rect x="0" y="0" width="16" height="16" fill="#0000FF"/><path d="M11 0H16V5z" fill="#000"/><path d="M0 11V16H5z" fill="#000"/><path d="M2 2H10.5L14 5.5V14H5.5L2 10.5z" fill="#D8D4B8"/><rect x="2.5" y="2.5" width="6" height="6" fill="#fff" stroke="#0000FF" stroke-width="1.2"/><rect x="6.5" y="6.5" width="7" height="6" fill="#fff" stroke="#0000FF" stroke-width="1.2"/><path d="M4 5.5h3M8.5 8.5h3M8.5 10.5h3" stroke="#000"/></svg>
<div class="t" style="left:136px;top:770px;color:#7A7868">Template Browser</div>
<div class="a" style="left:229px;top:769px;width:1px;height:14px;background:#ACA899"></div>
<div class="a" style="left:8px;top:790px;width:59px;height:20px;border:1px solid #C5C2B2;border-bottom:none;border-radius:3px 3px 0 0"></div>
<svg class="a" style="left:12px;top:792px" width="15" height="15" viewBox="0 0 15 15"><circle cx="7.5" cy="7.5" r="6.8" fill="#D83030" stroke="#A01818"/><path d="M4.5 4.5l6 6M10.5 4.5l-6 6" stroke="#fff" stroke-width="2.2"/></svg>
<div class="t" style="left:31px;top:794px;color:#7A7868">Errors</div>
<div class="a" style="left:76px;top:790px;width:68px;height:20px;border:1px solid #C5C2B2;border-bottom:none;border-radius:3px 3px 0 0"></div>
<svg class="a" style="left:80px;top:792px" width="15" height="15" viewBox="0 0 15 15"><rect x="0.5" y="0.5" width="14" height="10" fill="#000" stroke="#1080E0"/><path d="M3 5h3l1-1 1 2h4" stroke="#30C030" stroke-width="0.8" fill="none"/><path d="M6 11h3v2h3v1H3v-1h3z" fill="#8080C0"/></svg>
<div class="t" style="left:99px;top:794px;color:#7A7868">Console</div>
<div class="a" style="left:312px;top:76px;width:621px;height:711px;background:#ECE9D8;border:1px solid #716F64;border-top-color:#8A877A;border-left-color:#8A877A;border-width:1px 2px 2px 1px"></div>
<div class="a" style="left:313px;top:99px;width:6px;height:1px;background:#8A877A"></div>
<div class="a" style="left:496px;top:99px;width:436px;height:1px;background:#8A877A"></div>
<svg class="a" style="left:313px;top:78px" width="186" height="23" viewBox="0 0 186 23"><path d="M5.5 21.5L25.5 2.5H181.5L183.5 4.5V21.5z" fill="#fff" stroke="none"/><path d="M5.5 21.5L25.5 2.5H181.5L183.5 4.5V21.5" fill="none" stroke="#807D70"/></svg>
<div class="t" style="left:338px;top:81px;font-weight:bold;font-size:11.6px">Firebird Stored Procedures</div>
<svg class="a" style="left:898px;top:88px" width="9" height="5" viewBox="0 0 9 5"><path d="M0 0h9L4.5 4.5z" fill="#000"/></svg>
<svg class="a" style="left:914px;top:85px" width="10" height="9" viewBox="0 0 10 9"><path d="M0.8 0.8L8.7 8.2M8.7 0.8L0.8 8.2" stroke="#000" stroke-width="1.6"/></svg>
<div class="a" style="left:321px;top:101px;width:610px;height:684px;background:#ECE9D8;border-top:1px solid #fff;border-left:1px solid #fff;border-right:1px solid #A09D8E;border-bottom:1px solid #A09D8E;border-radius:3px 0 0 0"></div>
<div class="a" style="left:325px;top:122px;width:604px;height:1px;background:#fff"></div>
<div class="a" style="left:322px;top:102px;width:87px;height:21px;background:#ECE9D8;border-left:1px solid #fff;border-top:1px solid #fff;border-radius:3px 0 0 0"></div>
<div class="a" style="left:408px;top:103px;width:2px;height:19px;background:#807D70"></div>
<div class="t" style="left:322px;width:87px;text-align:center;top:104px">Template Code</div>
<div class="a" style="left:410px;top:103px;width:78px;height:1px;background:#fff"></div>
<div class="a" style="left:488px;top:104px;width:2px;height:17px;background:#807D70"></div>
<div class="t" style="left:409px;width:80px;text-align:center;top:106px">Interface Code</div>
<div class="a" style="left:490px;top:103px;width:91px;height:1px;background:#fff"></div>
<div class="a" style="left:581px;top:104px;width:2px;height:17px;background:#807D70"></div>
<div class="t" style="left:489px;width:93px;text-align:center;top:106px">Template Source</div>
<div class="a" style="left:583px;top:103px;width:89px;height:1px;background:#fff"></div>
<div class="a" style="left:672px;top:104px;width:2px;height:17px;background:#807D70"></div>
<div class="t" style="left:582px;width:91px;text-align:center;top:106px">Interface Source</div>
<div class="a" style="left:674px;top:103px;width:42px;height:1px;background:#fff"></div>
<div class="a" style="left:716px;top:104px;width:2px;height:17px;background:#807D70"></div>
<div class="t" style="left:673px;width:44px;text-align:center;top:106px">Output</div>
<div class="a" style="left:325px;top:123px;width:586px;height:642px;background:#fff;overflow:hidden">
<div class="a" style="left:16px;top:0;width:570px;height:528px;background:#D0D0F0"></div>
<div class="a" style="left:16px;top:640px;width:570px;height:16px;background:#D0D0F0"></div>
<div class="a" style="left:16px;top:528px;width:16px;height:16px;background:#FFFF00"></div>
<div class="a" style="left:16px;top:608px;width:24px;height:16px;background:#FFFF00"></div>
<div class="a" style="left:40px;top:608px;width:448px;height:16px;background:#D0D0F0"></div>
<div class="a" style="left:488px;top:608px;width:16px;height:16px;background:#FFFF00"></div>
<div class="a" style="left:16px;top:640px;width:16px;height:16px;background:#FFFF00"></div>
<div class="mono" style="left:16px;top:0px"><span class="k">End If</span></div>
<div class="mono" style="left:16px;top:16px"></div>
<div class="mono" style="left:16px;top:32px"></div>
<div class="mono" style="left:16px;top:48px"><span class="k">Dim</span><span class="i"> databaseName</span></div>
<div class="mono" style="left:16px;top:64px"><span class="i">databaseName  = input.Item(</span><span class="s">"cmbDatabase"</span><span class="i">)</span></div>
<div class="mono" style="left:16px;top:80px"><span class="k">Set</span><span class="i"> database = MyMeta.Databases(databaseName)</span></div>
<div class="mono" style="left:16px;top:96px"></div>
<div class="mono" style="left:16px;top:112px"><span class="k">Set</span><span class="i"> tableNames = input.Item(</span><span class="s">"lstTables"</span><span class="i">)</span></div>
<div class="mono" style="left:16px;top:128px"></div>
<div class="mono" style="left:16px;top:144px"><span class="c">' Do we do ALTER or CREATE</span></div>
<div class="mono" style="left:16px;top:160px"><span class="i">alterStatement = input.Item(</span><span class="s">"chkBox"</span><span class="i">)</span></div>
<div class="mono" style="left:16px;top:176px"><span class="k">If</span><span class="i"> alterStatement </span><span class="k">then</span></div>
<div class="mono" style="left:16px;top:192px"><span class="i">    statement = </span><span class="s">"ALTER PROCEDURE ["</span></div>
<div class="mono" style="left:16px;top:208px"><span class="k">Else</span></div>
<div class="mono" style="left:16px;top:224px"><span class="i">    statement = </span><span class="s">"CREATE PROCEDURE ["</span></div>
<div class="mono" style="left:16px;top:240px"><span class="k">End If</span></div>
<div class="mono" style="left:16px;top:256px"></div>
<div class="mono" style="left:16px;top:272px"><span class="c">' Loop through the tables the user select and generate the stored procs</span></div>
<div class="mono" style="left:16px;top:288px"><span class="k">For</span><span class="i"> intLp = </span><span class="n">0</span><span class="i"> </span><span class="k">To</span><span class="i"> tableNames.Count - </span><span class="n">1</span></div>
<div class="mono" style="left:16px;top:304px"></div>
<div class="mono" style="left:16px;top:320px"><span class="i">    </span><span class="k">Set</span><span class="i"> objTable = database.Tables(tablenames.item(intLp))</span></div>
<div class="mono" style="left:16px;top:336px"><span class="i">    </span><span class="k">Set</span><span class="i"> props = objTable.Properties</span></div>
<div class="mono" style="left:16px;top:352px"></div>
<div class="mono" style="left:16px;top:368px"><span class="i">    </span><span class="k">If</span><span class="i"> objTable.PrimaryKeys.Count = </span><span class="n">0</span><span class="i"> </span><span class="k">Then</span></div>
<div class="mono" style="left:16px;top:384px"><span class="i">        output.write </span><span class="s">"-- ERROR: Table '" </span><span class="o">&amp;</span><span class="i"> objTable.Name </span><span class="o">&amp;</span><span class="s"> "' must have a primary key"</span></div>
<div class="mono" style="left:16px;top:400px"><span class="i">        </span><span class="k">Exit For</span></div>
<div class="mono" style="left:16px;top:416px"><span class="i">    </span><span class="k">End If</span></div>
<div class="mono" style="left:16px;top:432px"></div>
<div class="mono" style="left:16px;top:448px"><span class="i">    output.</span></div>
<div class="mono" style="left:16px;top:464px"><span class="c">'-----------------------------------------------------------------------------</span></div>
<div class="mono" style="left:16px;top:480px"><span class="c">' LoadByPrimaryKey</span></div>
<div class="mono" style="left:16px;top:496px"><span class="c">'-----------------------------------------------------------------------------</span></div>
<div class="mono" style="left:16px;top:512px"><span class="i">strProcName = tableNames.item(i).Name)</span></div>
<div class="mono" style="left:16px;top:528px"><span style="color:#000">%&gt;</span></div>
<div class="mono" style="left:16px;top:544px"><span class="o">COMMIT WORK;</span></div>
<div class="mono" style="left:16px;top:560px"><span class="o">SET AUTODDL OFF;</span></div>
<div class="mono" style="left:16px;top:576px"><span class="o">SET TERM ^ ;</span></div>
<div class="mono" style="left:16px;top:592px"></div>
<div class="mono" style="left:16px;top:608px"><span style="color:#000">&lt;%=</span><span class="i"> BuildCreateAlterStatement(strProcName, alterStatement) </span><span style="color:#000">%&gt;</span></div>
<div class="mono" style="left:16px;top:624px"><span class="o">(</span></div>
<div class="mono" style="left:16px;top:640px"><span style="color:#000">&lt;%</span></div>
</div>
<div class="a" style="left:911px;top:123px;width:17px;height:643px;background:linear-gradient(90deg,#F3F1EC,#FEFEFB)"></div>
<svg class="a" style="left:911px;top:123px" width="17" height="17" viewBox="0 0 17 17"><rect x="0.5" y="0.5" width="16" height="16" rx="2" fill="#C6D6FC" stroke="#B2C4EE"/><path d="M5 10l3.5-3.5L12 10" stroke="#4D6185" stroke-width="2" fill="none"/></svg>
<div class="a" style="left:912px;top:203px;width:15px;height:32px;border:1px solid #A5B8E8;border-radius:2px;background:linear-gradient(90deg,#C6D6FC,#B7CBFA)"></div>
<svg class="a" style="left:915px;top:214px" width="9" height="9" viewBox="0 0 9 9"><rect x="0" y="1" width="7" height="1" fill="#EEF3FE"/><rect x="1" y="2" width="7" height="1" fill="#8CA6DC"/><rect x="0" y="3" width="7" height="1" fill="#EEF3FE"/><rect x="1" y="4" width="7" height="1" fill="#8CA6DC"/><rect x="0" y="5" width="7" height="1" fill="#EEF3FE"/><rect x="1" y="6" width="7" height="1" fill="#8CA6DC"/><rect x="0" y="7" width="7" height="1" fill="#EEF3FE"/><rect x="1" y="8" width="7" height="1" fill="#8CA6DC"/></svg>
<svg class="a" style="left:911px;top:748px" width="17" height="17" viewBox="0 0 17 17"><rect x="0.5" y="0.5" width="16" height="16" rx="2" fill="#C6D6FC" stroke="#B2C4EE"/><path d="M5 7l3.5 3.5L12 7" stroke="#4D6185" stroke-width="2" fill="none"/></svg>
<div class="a" style="left:325px;top:765px;width:586px;height:17px;background:linear-gradient(#F3F1EC,#FEFEFB)"></div>
<div class="a" style="left:911px;top:765px;width:18px;height:18px;background:#ECE9D8"></div>
<svg class="a" style="left:325px;top:765px" width="17" height="17" viewBox="0 0 17 17"><rect x="0.5" y="0.5" width="16" height="16" rx="2" fill="#C6D6FC" stroke="#B2C4EE"/><path d="M10 5L6.5 8.5 10 12" stroke="#4D6185" stroke-width="2" fill="none"/></svg>
<div class="a" style="left:342px;top:766px;width:157px;height:15px;border:1px solid #A5B8E8;border-radius:2px;background:linear-gradient(#C6D6FC,#B7CBFA)"></div>
<svg class="a" style="left:416px;top:769px" width="9" height="9" viewBox="0 0 9 9"><rect x="1" y="0" width="1" height="7" fill="#EEF3FE"/><rect x="2" y="1" width="1" height="7" fill="#8CA6DC"/><rect x="3" y="0" width="1" height="7" fill="#EEF3FE"/><rect x="4" y="1" width="1" height="7" fill="#8CA6DC"/><rect x="5" y="0" width="1" height="7" fill="#EEF3FE"/><rect x="6" y="1" width="1" height="7" fill="#8CA6DC"/><rect x="7" y="0" width="1" height="7" fill="#EEF3FE"/><rect x="8" y="1" width="1" height="7" fill="#8CA6DC"/></svg>
<svg class="a" style="left:894px;top:765px" width="17" height="17" viewBox="0 0 17 17"><rect x="0.5" y="0.5" width="16" height="16" rx="2" fill="#C6D6FC" stroke="#B2C4EE"/><path d="M7 5l3.5 3.5L7 12" stroke="#4D6185" stroke-width="2" fill="none"/></svg>
<div class="a" style="left:425px;top:587px;width:172px;height:86px;background:#fff;border-style:solid;border-width:2px 2px 2px 2px;border-color:#F1EFE2 #5F5D52 #5F5D52 #F1EFE2;box-shadow:inset -1px -1px 0 #ACA899"></div>
<div class="a" style="left:428px;top:589px;width:149px;height:17px;background:#316AC5;border:1px dotted #D8A040"></div>
<div class="mono" style="left:430px;top:590px;color:#fff">append</div>
<div class="mono" style="left:430px;top:606px;color:#000">autoTab</div>
<div class="mono" style="left:430px;top:622px;color:#000">autoTabLn</div>
<div class="mono" style="left:430px;top:638px;color:#000">clear</div>
<div class="mono" style="left:430px;top:654px;color:#000">decTab</div>
<div class="a" style="left:577px;top:589px;width:16px;height:81px;background:linear-gradient(90deg,#F3F1EC,#FEFEFB)"></div>
<svg class="a" style="left:577px;top:589px" width="16" height="16" viewBox="0 0 16 16"><rect x="0.5" y="0.5" width="15" height="15" rx="2" fill="#C6D6FC" stroke="#B2C4EE"/><path d="M5 10l3.5-3.5L12 10" stroke="#4D6185" stroke-width="2" fill="none"/></svg>
<div class="a" style="left:577px;top:607px;width:16px;height:14px;border:1px solid #A5B8E8;border-radius:2px;background:linear-gradient(90deg,#C6D6FC,#B7CBFA)"></div>
<svg class="a" style="left:577px;top:654px" width="16" height="16" viewBox="0 0 16 16"><rect x="0.5" y="0.5" width="15" height="15" rx="2" fill="#C6D6FC" stroke="#B2C4EE"/><path d="M5 7l3.5 3.5L12 7" stroke="#4D6185" stroke-width="2" fill="none"/></svg>
<div class="a" style="left:427px;top:572px;width:1px;height:15px;background:#000"></div>
<div class="a" style="left:314px;top:386px;width:6px;height:1px;background:#8A877A"></div>
<div class="a" style="left:314px;top:501px;width:6px;height:1px;background:#8A877A"></div>
<svg class="a" style="left:314px;top:389px" width="6" height="8" viewBox="0 0 6 8"><path d="M1 0v7l4-3.5z" fill="#6F6C60"/></svg>
<svg class="a" style="left:314px;top:492px" width="6" height="8" viewBox="0 0 6 8"><path d="M1 0v7l4-3.5z" fill="#6F6C60"/></svg>
<svg class="a" style="left:315px;top:399px" width="5" height="92" viewBox="0 0 5 92"><rect x="2" y="1" width="1" height="1" fill="#5A584E"/><rect x="1" y="0" width="1" height="1" fill="#fff"/><rect x="2" y="4" width="1" height="1" fill="#5A584E"/><rect x="1" y="3" width="1" height="1" fill="#fff"/><rect x="2" y="7" width="1" height="1" fill="#5A584E"/><rect x="1" y="6" width="1" height="1" fill="#fff"/><rect x="2" y="10" width="1" height="1" fill="#5A584E"/><rect x="1" y="9" width="1" height="1" fill="#fff"/><rect x="2" y="13" width="1" height="1" fill="#5A584E"/><rect x="1" y="12" width="1" height="1" fill="#fff"/><rect x="2" y="16" width="1" height="1" fill="#5A584E"/><rect x="1" y="15" width="1" height="1" fill="#fff"/><rect x="2" y="19" width="1" height="1" fill="#5A584E"/><rect x="1" y="18" width="1" height="1" fill="#fff"/><rect x="2" y="22" width="1" height="1" fill="#5A584E"/><rect x="1" y="21" width="1" height="1" fill="#fff"/><rect x="2" y="25" width="1" height="1" fill="#5A584E"/><rect x="1" y="24" width="1" height="1" fill="#fff"/><rect x="2" y="28" width="1" height="1" fill="#5A584E"/><rect x="1" y="27" width="1" height="1" fill="#fff"/><rect x="2" y="31" width="1" height="1" fill="#5A584E"/><rect x="1" y="30" width="1" height="1" fill="#fff"/><rect x="2" y="34" width="1" height="1" fill="#5A584E"/><rect x="1" y="33" width="1" height="1" fill="#fff"/><rect x="2" y="37" width="1" height="1" fill="#5A584E"/><rect x="1" y="36" width="1" height="1" fill="#fff"/><rect x="2" y="40" width="1" height="1" fill="#5A584E"/><rect x="1" y="39" width="1" height="1" fill="#fff"/><rect x="2" y="43" width="1" height="1" fill="#5A584E"/><rect x="1" y="42" width="1" height="1" fill="#fff"/><rect x="2" y="46" width="1" height="1" fill="#5A584E"/><rect x="1" y="45" width="1" height="1" fill="#fff"/><rect x="2" y="49" width="1" height="1" fill="#5A584E"/><rect x="1" y="48" width="1" height="1" fill="#fff"/><rect x="2" y="52" width="1" height="1" fill="#5A584E"/><rect x="1" y="51" width="1" height="1" fill="#fff"/><rect x="2" y="55" width="1" height="1" fill="#5A584E"/><rect x="1" y="54" width="1" height="1" fill="#fff"/><rect x="2" y="58" width="1" height="1" fill="#5A584E"/><rect x="1" y="57" width="1" height="1" fill="#fff"/><rect x="2" y="61" width="1" height="1" fill="#5A584E"/><rect x="1" y="60" width="1" height="1" fill="#fff"/><rect x="2" y="64" width="1" height="1" fill="#5A584E"/><rect x="1" y="63" width="1" height="1" fill="#fff"/><rect x="2" y="67" width="1" height="1" fill="#5A584E"/><rect x="1" y="66" width="1" height="1" fill="#fff"/><rect x="2" y="70" width="1" height="1" fill="#5A584E"/><rect x="1" y="69" width="1" height="1" fill="#fff"/><rect x="2" y="73" width="1" height="1" fill="#5A584E"/><rect x="1" y="72" width="1" height="1" fill="#fff"/><rect x="2" y="76" width="1" height="1" fill="#5A584E"/><rect x="1" y="75" width="1" height="1" fill="#fff"/><rect x="2" y="79" width="1" height="1" fill="#5A584E"/><rect x="1" y="78" width="1" height="1" fill="#fff"/><rect x="2" y="82" width="1" height="1" fill="#5A584E"/><rect x="1" y="81" width="1" height="1" fill="#fff"/><rect x="2" y="85" width="1" height="1" fill="#5A584E"/><rect x="1" y="84" width="1" height="1" fill="#fff"/><rect x="2" y="88" width="1" height="1" fill="#5A584E"/><rect x="1" y="87" width="1" height="1" fill="#fff"/></svg>
<div class="a" style="left:937px;top:76px;width:302px;height:18px;background:#ACA899"></div>
<div class="t" style="left:942px;top:79px">MyMeta Properties</div>
<svg class="a" style="left:1208px;top:81px" width="8" height="11" viewBox="0 0 8 11"><rect x="1" y="0" width="5" height="1" fill="#000"/><rect x="1" y="0" width="1" height="6" fill="#000"/><rect x="4" y="0" width="2" height="6" fill="#000"/><rect x="0" y="6" width="7" height="1" fill="#000"/><rect x="3" y="7" width="1" height="3" fill="#000"/></svg>
<svg class="a" style="left:1224px;top:82px" width="10" height="9" viewBox="0 0 10 9"><path d="M0.8 0.8L8.7 8.2M8.7 0.8L0.8 8.2" stroke="#000" stroke-width="1.6"/></svg>
<div class="a" style="left:937px;top:94px;width:302px;height:672px;background:#F5DEB3;overflow:hidden">
<div class="a" style="left:0;top:0;width:302px;height:19px;background:#ECE9D8;border-top:1px solid #fff;border-bottom:1px solid #ACA899;border-right:1px solid #ACA899"></div>
<div class="a" style="left:150px;top:2px;width:1px;height:16px;background:#ACA899"></div><div class="a" style="left:151px;top:2px;width:1px;height:16px;background:#fff"></div>
<div class="t" style="left:5px;top:1px;font-weight:bold;font-size:11.3px;letter-spacing:0.3px">Property</div>
<div class="t" style="left:155px;top:1px;font-weight:bold;font-size:11.3px;letter-spacing:0.6px">Value</div>
<div class="a" style="left:0;top:19px;width:302px;height:17px;background:#F5DEB3;border-bottom:1px solid #DAA520;border-right:1px solid #DAA520"></div>
<div class="a" style="left:150px;top:19px;width:1px;height:17px;background:#DAA520"></div>
<div class="t" style="left:3px;top:21px;font-weight:bold;font-size:11px">Name</div>
<div class="t" style="left:153px;top:21px;font-weight:bold;font-size:11px">FirstName</div>
<div class="a" style="left:0;top:36px;width:302px;height:17px;background:#EEE8AA;border-bottom:1px solid #DAA520;border-right:1px solid #DAA520"></div>
<div class="a" style="left:150px;top:36px;width:1px;height:17px;background:#DAA520"></div>
<div class="t" style="left:3px;top:38px;font-weight:bold;font-size:11px">Alias</div>
<div class="t" style="left:153px;top:38px;font-weight:bold;font-size:11px">FirstName</div>
<div class="a" style="left:0;top:53px;width:302px;height:17px;background:#F5DEB3;border-bottom:1px solid #DAA520;border-right:1px solid #DAA520"></div>
<div class="a" style="left:150px;top:53px;width:1px;height:17px;background:#DAA520"></div>
<div class="t" style="left:3px;top:55px;font-weight:bold;font-size:11px">Description</div>
<div class="t" style="left:153px;top:55px;font-weight:bold;font-size:11px"></div>
<div class="a" style="left:0;top:70px;width:302px;height:17px;background:#EEE8AA;border-bottom:1px solid #DAA520;border-right:1px solid #DAA520"></div>
<div class="a" style="left:150px;top:70px;width:1px;height:17px;background:#DAA520"></div>
<div class="t" style="left:3px;top:72px;font-weight:bold;font-size:11px">Ordinal</div>
<div class="t" style="left:153px;top:72px;font-weight:bold;font-size:11px">1</div>
<div class="a" style="left:0;top:87px;width:302px;height:17px;background:#F5DEB3;border-bottom:1px solid #DAA520;border-right:1px solid #DAA520"></div>
<div class="a" style="left:150px;top:87px;width:1px;height:17px;background:#DAA520"></div>
<div class="t" style="left:3px;top:89px;font-weight:bold;font-size:11px">DataTypeName</div>
<div class="t" style="left:153px;top:89px;font-weight:bold;font-size:11px">nvarchar</div>
<div class="a" style="left:0;top:104px;width:302px;height:17px;background:#EEE8AA;border-bottom:1px solid #DAA520;border-right:1px solid #DAA520"></div>
<div class="a" style="left:150px;top:104px;width:1px;height:17px;background:#DAA520"></div>
<div class="t" style="left:3px;top:106px;font-weight:bold;font-size:11px">DataTypeNameComplete</div>
<div class="t" style="left:153px;top:106px;font-weight:bold;font-size:11px">nvarchar(50)</div>
<div class="a" style="left:0;top:121px;width:302px;height:17px;background:#F5DEB3;border-bottom:1px solid #DAA520;border-right:1px solid #DAA520"></div>
<div class="a" style="left:150px;top:121px;width:1px;height:17px;background:#DAA520"></div>
<div class="t" style="left:3px;top:123px;font-weight:bold;font-size:11px">NumericPrecision</div>
<div class="t" style="left:153px;top:123px;font-weight:bold;font-size:11px">0</div>
<div class="a" style="left:0;top:138px;width:302px;height:17px;background:#EEE8AA;border-bottom:1px solid #DAA520;border-right:1px solid #DAA520"></div>
<div class="a" style="left:150px;top:138px;width:1px;height:17px;background:#DAA520"></div>
<div class="t" style="left:3px;top:140px;font-weight:bold;font-size:11px">NumericScale</div>
<div class="t" style="left:153px;top:140px;font-weight:bold;font-size:11px">0</div>
<div class="a" style="left:0;top:155px;width:302px;height:17px;background:#F5DEB3;border-bottom:1px solid #DAA520;border-right:1px solid #DAA520"></div>
<div class="a" style="left:150px;top:155px;width:1px;height:17px;background:#DAA520"></div>
<div class="t" style="left:3px;top:157px;font-weight:bold;font-size:11px">DateTimePrecision</div>
<div class="t" style="left:153px;top:157px;font-weight:bold;font-size:11px">0</div>
<div class="a" style="left:0;top:172px;width:302px;height:17px;background:#EEE8AA;border-bottom:1px solid #DAA520;border-right:1px solid #DAA520"></div>
<div class="a" style="left:150px;top:172px;width:1px;height:17px;background:#DAA520"></div>
<div class="t" style="left:3px;top:174px;font-weight:bold;font-size:11px">CharacterMaxLength</div>
<div class="t" style="left:153px;top:174px;font-weight:bold;font-size:11px">50</div>
<div class="a" style="left:0;top:189px;width:302px;height:17px;background:#F5DEB3;border-bottom:1px solid #DAA520;border-right:1px solid #DAA520"></div>
<div class="a" style="left:150px;top:189px;width:1px;height:17px;background:#DAA520"></div>
<div class="t" style="left:3px;top:191px;font-weight:bold;font-size:11px">CharacterOctetLength</div>
<div class="t" style="left:153px;top:191px;font-weight:bold;font-size:11px">100</div>
<div class="a" style="left:0;top:206px;width:302px;height:17px;background:#EEE8AA;border-bottom:1px solid #DAA520;border-right:1px solid #DAA520"></div>
<div class="a" style="left:150px;top:206px;width:1px;height:17px;background:#DAA520"></div>
<div class="t" style="left:3px;top:208px;font-weight:bold;font-size:11px">LanguageType</div>
<div class="t" style="left:153px;top:208px;font-weight:bold;font-size:11px">string</div>
<div class="a" style="left:0;top:223px;width:302px;height:17px;background:#F5DEB3;border-bottom:1px solid #DAA520;border-right:1px solid #DAA520"></div>
<div class="a" style="left:150px;top:223px;width:1px;height:17px;background:#DAA520"></div>
<div class="t" style="left:3px;top:225px;font-weight:bold;font-size:11px">DbTargetType</div>
<div class="t" style="left:153px;top:225px;font-weight:bold;font-size:11px">SqlDbType.NVarChar</div>
<div class="a" style="left:0;top:240px;width:302px;height:17px;background:#EEE8AA;border-bottom:1px solid #DAA520;border-right:1px solid #DAA520"></div>
<div class="a" style="left:150px;top:240px;width:1px;height:17px;background:#DAA520"></div>
<div class="t" style="left:3px;top:242px;font-weight:bold;font-size:11px">IsNullable</div>
<div class="t" style="left:153px;top:242px;font-weight:bold;font-size:11px">True</div>
<div class="a" style="left:0;top:257px;width:302px;height:17px;background:#F5DEB3;border-bottom:1px solid #DAA520;border-right:1px solid #DAA520"></div>
<div class="a" style="left:150px;top:257px;width:1px;height:17px;background:#DAA520"></div>
<div class="t" style="left:3px;top:259px;font-weight:bold;font-size:11px">IsComputed</div>
<div class="t" style="left:153px;top:259px;font-weight:bold;font-size:11px">False</div>
<div class="a" style="left:0;top:274px;width:302px;height:17px;background:#EEE8AA;border-bottom:1px solid #DAA520;border-right:1px solid #DAA520"></div>
<div class="a" style="left:150px;top:274px;width:1px;height:17px;background:#DAA520"></div>
<div class="t" style="left:3px;top:276px;font-weight:bold;font-size:11px">IsInPrimaryKey</div>
<div class="t" style="left:153px;top:276px;font-weight:bold;font-size:11px">False</div>
<div class="a" style="left:0;top:291px;width:302px;height:17px;background:#F5DEB3;border-bottom:1px solid #DAA520;border-right:1px solid #DAA520"></div>
<div class="a" style="left:150px;top:291px;width:1px;height:17px;background:#DAA520"></div>
<div class="t" style="left:3px;top:293px;font-weight:bold;font-size:11px">IsInForeignKey</div>
<div class="t" style="left:153px;top:293px;font-weight:bold;font-size:11px">False</div>
<div class="a" style="left:0;top:308px;width:302px;height:17px;background:#EEE8AA;border-bottom:1px solid #DAA520;border-right:1px solid #DAA520"></div>
<div class="a" style="left:150px;top:308px;width:1px;height:17px;background:#DAA520"></div>
<div class="t" style="left:3px;top:310px;font-weight:bold;font-size:11px">IsAutoKey</div>
<div class="t" style="left:153px;top:310px;font-weight:bold;font-size:11px">False</div>
<div class="a" style="left:0;top:325px;width:302px;height:17px;background:#F5DEB3;border-bottom:1px solid #DAA520;border-right:1px solid #DAA520"></div>
<div class="a" style="left:150px;top:325px;width:1px;height:17px;background:#DAA520"></div>
<div class="t" style="left:3px;top:327px;font-weight:bold;font-size:11px">AutoKeySeed</div>
<div class="t" style="left:153px;top:327px;font-weight:bold;font-size:11px">0</div>
<div class="a" style="left:0;top:342px;width:302px;height:17px;background:#EEE8AA;border-bottom:1px solid #DAA520;border-right:1px solid #DAA520"></div>
<div class="a" style="left:150px;top:342px;width:1px;height:17px;background:#DAA520"></div>
<div class="t" style="left:3px;top:344px;font-weight:bold;font-size:11px">AutoKeyIncrement</div>
<div class="t" style="left:153px;top:344px;font-weight:bold;font-size:11px">0</div>
<div class="a" style="left:0;top:359px;width:302px;height:17px;background:#F5DEB3;border-bottom:1px solid #DAA520;border-right:1px solid #DAA520"></div>
<div class="a" style="left:150px;top:359px;width:1px;height:17px;background:#DAA520"></div>
<div class="t" style="left:3px;top:361px;font-weight:bold;font-size:11px">HasDefault</div>
<div class="t" style="left:153px;top:361px;font-weight:bold;font-size:11px">False</div>
<div class="a" style="left:0;top:376px;width:302px;height:17px;background:#EEE8AA;border-bottom:1px solid #DAA520;border-right:1px solid #DAA520"></div>
<div class="a" style="left:150px;top:376px;width:1px;height:17px;background:#DAA520"></div>
<div class="t" style="left:3px;top:378px;font-weight:bold;font-size:11px">Default</div>
<div class="t" style="left:153px;top:378px;font-weight:bold;font-size:11px"></div>
<div class="a" style="left:0;top:393px;width:302px;height:17px;background:#F5DEB3;border-bottom:1px solid #DAA520;border-right:1px solid #DAA520"></div>
<div class="a" style="left:150px;top:393px;width:1px;height:17px;background:#DAA520"></div>
<div class="t" style="left:3px;top:395px;font-weight:bold;font-size:11px">Flags</div>
<div class="t" style="left:153px;top:395px;font-weight:bold;font-size:11px">100</div>
<div class="a" style="left:0;top:410px;width:302px;height:17px;background:#EEE8AA;border-bottom:1px solid #DAA520;border-right:1px solid #DAA520"></div>
<div class="a" style="left:150px;top:410px;width:1px;height:17px;background:#DAA520"></div>
<div class="t" style="left:3px;top:412px;font-weight:bold;font-size:11px">PropID</div>
<div class="t" style="left:153px;top:412px;font-weight:bold;font-size:11px">0</div>
<div class="a" style="left:0;top:427px;width:302px;height:17px;background:#F5DEB3;border-bottom:1px solid #DAA520;border-right:1px solid #DAA520"></div>
<div class="a" style="left:150px;top:427px;width:1px;height:17px;background:#DAA520"></div>
<div class="t" style="left:3px;top:429px;font-weight:bold;font-size:11px">Guid</div>
<div class="t" style="left:153px;top:429px;font-weight:bold;font-size:11px">00000000-0000-0000-0000-000000000000</div>
<div class="a" style="left:0;top:444px;width:302px;height:17px;background:#EEE8AA;border-bottom:1px solid #DAA520;border-right:1px solid #DAA520"></div>
<div class="a" style="left:150px;top:444px;width:1px;height:17px;background:#DAA520"></div>
<div class="t" style="left:3px;top:446px;font-weight:bold;font-size:11px">TypeGuid</div>
<div class="t" style="left:153px;top:446px;font-weight:bold;font-size:11px">00000000-0000-0000-0000-000000000000</div>
<div class="a" style="left:0;top:461px;width:302px;height:17px;background:#F5DEB3;border-bottom:1px solid #DAA520;border-right:1px solid #DAA520"></div>
<div class="a" style="left:150px;top:461px;width:1px;height:17px;background:#DAA520"></div>
<div class="t" style="left:3px;top:463px;font-weight:bold;font-size:11px">LCID</div>
<div class="t" style="left:153px;top:463px;font-weight:bold;font-size:11px">1033</div>
<div class="a" style="left:0;top:478px;width:302px;height:17px;background:#EEE8AA;border-bottom:1px solid #DAA520;border-right:1px solid #DAA520"></div>
<div class="a" style="left:150px;top:478px;width:1px;height:17px;background:#DAA520"></div>
<div class="t" style="left:3px;top:480px;font-weight:bold;font-size:11px">SortID</div>
<div class="t" style="left:153px;top:480px;font-weight:bold;font-size:11px">52</div>
<div class="a" style="left:0;top:495px;width:302px;height:17px;background:#F5DEB3;border-bottom:1px solid #DAA520;border-right:1px solid #DAA520"></div>
<div class="a" style="left:150px;top:495px;width:1px;height:17px;background:#DAA520"></div>
<div class="t" style="left:3px;top:497px;font-weight:bold;font-size:11px">CompFlags</div>
<div class="t" style="left:153px;top:497px;font-weight:bold;font-size:11px">196609</div>
<div class="a" style="left:0;top:512px;width:302px;height:17px;background:#EEE8AA;border-bottom:1px solid #DAA520;border-right:1px solid #DAA520"></div>
<div class="a" style="left:150px;top:512px;width:1px;height:17px;background:#DAA520"></div>
<div class="t" style="left:3px;top:514px;font-weight:bold;font-size:11px">DomainName</div>
<div class="t" style="left:153px;top:514px;font-weight:bold;font-size:11px"></div>
<div class="a" style="left:0;top:529px;width:302px;height:17px;background:#F5DEB3;border-bottom:1px solid #DAA520;border-right:1px solid #DAA520"></div>
<div class="a" style="left:150px;top:529px;width:1px;height:17px;background:#DAA520"></div>
<div class="t" style="left:3px;top:531px;font-weight:bold;font-size:11px">HasDomain</div>
<div class="t" style="left:153px;top:531px;font-weight:bold;font-size:11px">False</div>
</div>
<div class="t" style="left:947px;top:738px;font-weight:bold;font-size:11px;letter-spacing:0.3px;color:#0000FF;text-decoration:underline">IColumn Help ...</div>
<div class="a" style="left:937px;top:766px;width:302px;height:44px;background:#F1EFE6;border-top:1px solid #ACA899"></div>
<div class="a" style="left:938px;top:765px;width:60px;height:21px;background:#F3F1EA;border:1px solid #ACA899;border-top:none;border-radius:0 0 3px 3px"></div>
<svg class="a" style="left:939px;top:768px" width="16" height="17" viewBox="0 0 16 17"><path d="M0.5 0.5h11l3 3v12h-14z" fill="#fff" stroke="#000"/><path d="M11.5 0.5v3h3" fill="none" stroke="#000"/><path d="M2 9L7 4l4 3" stroke="#888" stroke-width="2" fill="none"/><rect x="13" y="0" width="2" height="5" fill="#1020C0"/><path d="M3 10.5h9M3 12.5h9" stroke="#BBB"/></svg>
<div class="t" style="left:960px;top:770px;color:#000">My...</div>
<svg class="a" style="left:1000px;top:768px" width="16" height="17" viewBox="0 0 16 17"><rect x="0.5" y="0.5" width="12" height="13" fill="#fff" stroke="#000"/><path d="M2 2.5h9M2 4.5h9M2 6.5h9M2 8.5h4" stroke="#555"/><rect x="6.5" y="8.5" width="9" height="7" fill="#fff" stroke="#000"/><rect x="7" y="9" width="8" height="2" fill="#2BC8E8"/></svg>
<div class="t" style="left:1020px;top:770px;color:#7A7868">Lan...</div>
<div class="a" style="left:998px;top:769px;width:1px;height:14px;background:#ACA899"></div>
<svg class="a" style="left:1061px;top:768px" width="16" height="17" viewBox="0 0 16 17"><path d="M0.5 0.5h11l3 3v12h-14z" fill="#fff" stroke="#000"/><path d="M11.5 0.5v3h3" fill="none" stroke="#000"/><path d="M2 3.5h8M2 5.5h10M2 7.5h6M2 9.5h6M2 11.5h5" stroke="#999"/><rect x="7.5" y="9.5" width="6" height="7" rx="2.5" fill="#F0F040" stroke="#C8C020"/></svg>
<div class="t" style="left:1080px;top:770px;color:#7A7868">DbT...</div>
<div class="a" style="left:1059px;top:769px;width:1px;height:14px;background:#ACA899"></div>
<svg class="a" style="left:1121px;top:768px" width="16" height="17" viewBox="0 0 16 17"><path d="M0.5 0.5h11l3 3v12h-14z" fill="#fff" stroke="#000"/><path d="M11.5 0.5v3h3" fill="none" stroke="#000"/><path d="M5 4v9h6" stroke="#109010" stroke-width="2.2" fill="none"/></svg>
<div class="t" style="left:1140px;top:770px;color:#7A7868">Use...</div>
<div class="a" style="left:1119px;top:769px;width:1px;height:14px;background:#ACA899"></div>
<svg class="a" style="left:1181px;top:768px" width="16" height="17" viewBox="0 0 16 17"><path d="M0.5 0.5h11l3 3v12h-14z" fill="#fff" stroke="#000"/><path d="M11.5 0.5v3h3" fill="none" stroke="#000"/><text x="7.5" y="13" font-family="Liberation Sans" font-weight="bold" font-size="12" text-anchor="middle" fill="#102090">G</text></svg>
<div class="t" style="left:1201px;top:770px;color:#7A7868">Glo...</div>
<div class="a" style="left:1179px;top:769px;width:1px;height:14px;background:#ACA899"></div>
<div class="a" style="left:4px;top:810px;width:1235px;height:1px;background:#fff"></div>
<div class="a" style="left:4px;top:811px;width:1235px;height:21px;background:#ECE9D8"></div>
<svg class="a" style="left:1224px;top:818px" width="12" height="12"><rect x="9" y="1" width="2" height="2" fill="#B5B09B"/><rect x="6" y="4" width="2" height="2" fill="#B5B09B"/><rect x="9" y="4" width="2" height="2" fill="#B5B09B"/><rect x="3" y="7" width="2" height="2" fill="#B5B09B"/><rect x="6" y="7" width="2" height="2" fill="#B5B09B"/><rect x="9" y="7" width="2" height="2" fill="#B5B09B"/></svg>
</body></html>
